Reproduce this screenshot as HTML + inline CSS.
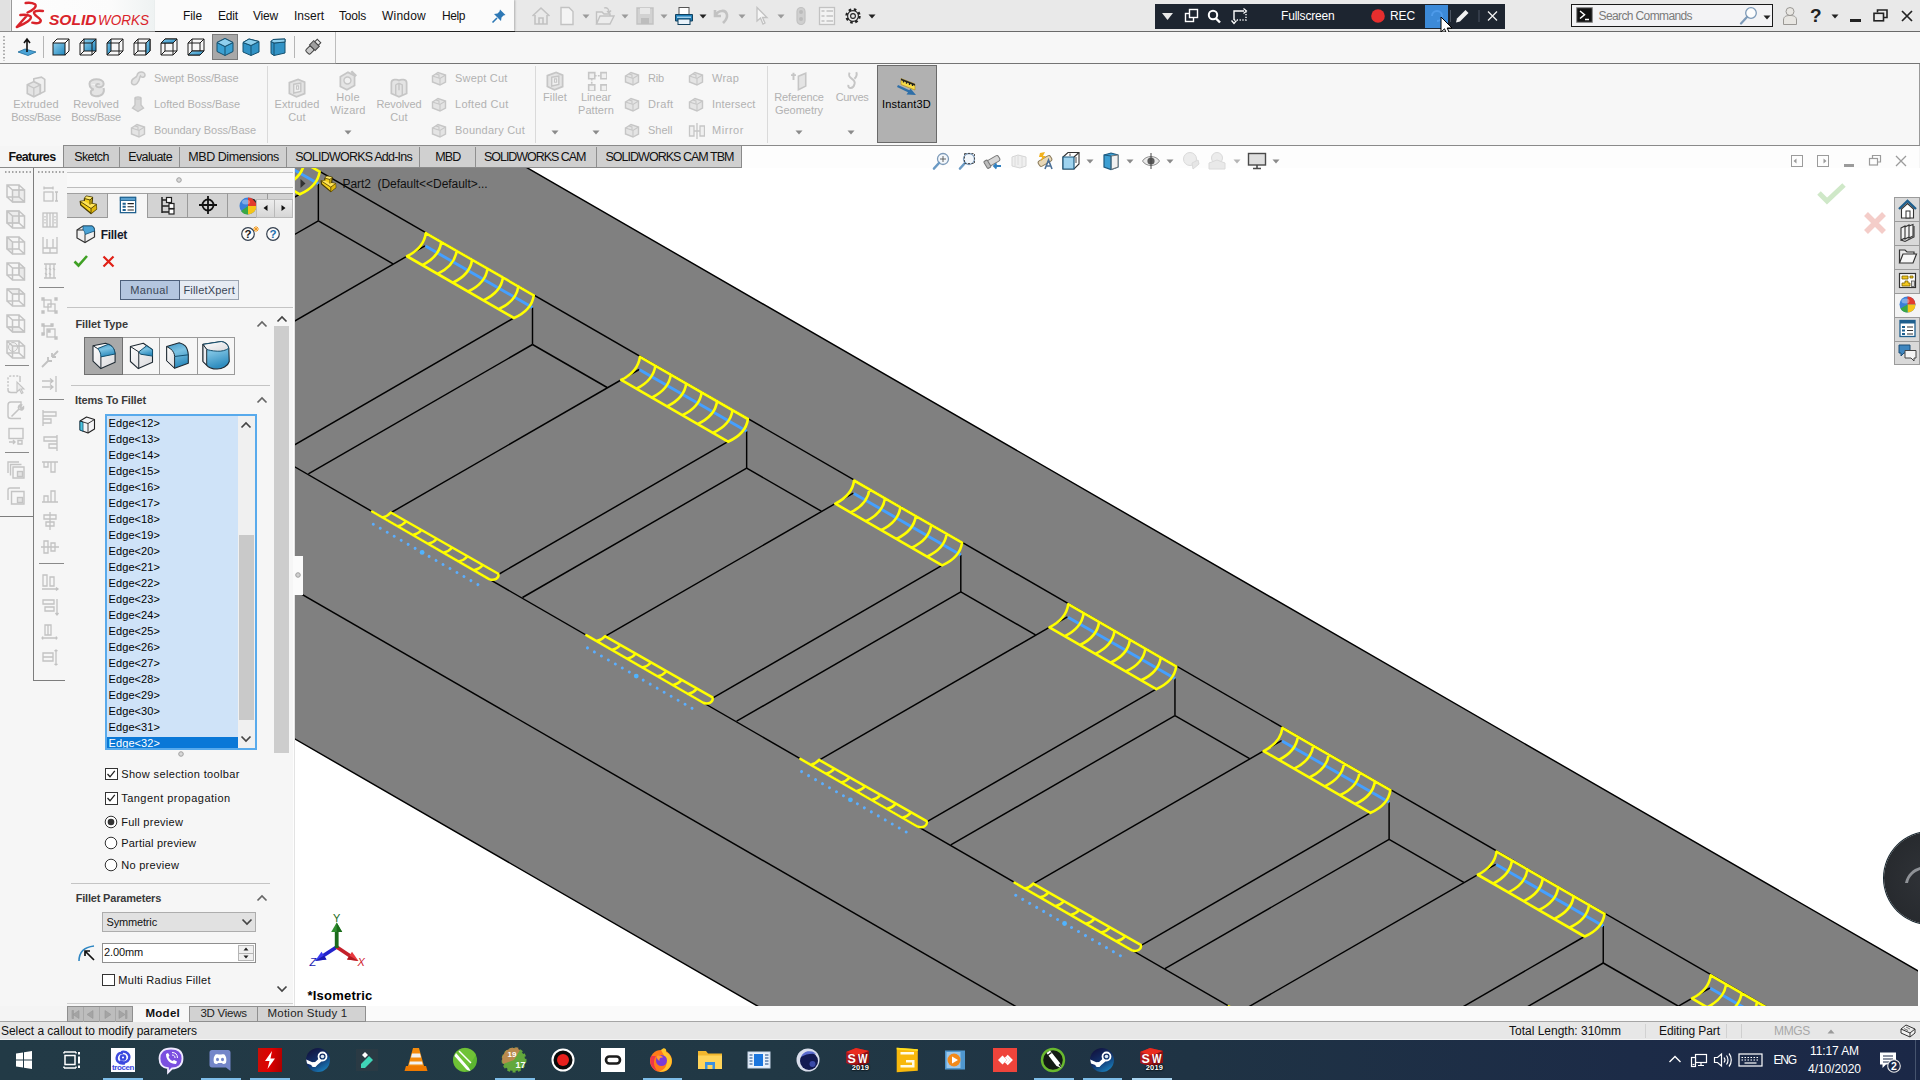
<!DOCTYPE html>
<html lang="en"><head><meta charset="utf-8"><title>SOLIDWORKS - Fillet</title><style>
html,body{margin:0;padding:0;}
body{width:1920px;height:1080px;overflow:hidden;position:relative;background:#fff;font-family:"Liberation Sans",sans-serif;font-size:12px;}
.t{position:absolute;white-space:nowrap;display:block;}
.b{position:absolute;display:block;}
svg text{font-family:"Liberation Sans",sans-serif;}
</style></head>
<body>
<svg class="vp" width="1920" height="1080" viewBox="0 0 1920 1080" style="position:absolute;left:0;top:0">
<defs><clipPath id="vpc"><rect x="295" y="168" width="1623" height="838"/></clipPath></defs>
<g clip-path="url(#vpc)">
<rect x="295" y="168" width="1623" height="838" fill="#fff"/>
<polygon points="200,-21.08 2000,1018.15 2000,1723.38 200,684.15" fill="#808080" stroke="#000" stroke-width="1.45"/>
<line x1="200" y1="102.31" x2="2000" y2="1141.54" stroke="#000" stroke-width="1.45"/>
<line x1="200" y1="412.14" x2="2000" y2="1451.37" stroke="#000" stroke-width="1.45"/>
<line x1="200" y1="535.46" x2="2000" y2="1574.69" stroke="#000" stroke-width="1.45"/>
<line x1="104.2" y1="60.1" x2="104.2" y2="97.1" stroke="#000" stroke-width="1.45"/>
<line x1="104.2" y1="97.1" x2="-119.95" y2="226.4" stroke="#000" stroke-width="1.45"/>
<line x1="85.45" y1="70.6" x2="-144.95" y2="203.9" stroke="#000" stroke-width="1.45"/>
<line x1="-3.3" y1="-1.6" x2="-251.2" y2="141.4" stroke="#000" stroke-width="1.45"/>
<line x1="104.2" y1="97.1" x2="178.9" y2="140.1" stroke="#000" stroke-width="1.45"/>
<line x1="318.35" y1="183.8" x2="318.35" y2="220.8" stroke="#000" stroke-width="1.45"/>
<line x1="318.35" y1="220.8" x2="94.2" y2="350.1" stroke="#000" stroke-width="1.45"/>
<line x1="299.6" y1="194.3" x2="69.2" y2="327.6" stroke="#000" stroke-width="1.45"/>
<line x1="210.85" y1="122.1" x2="-37.05" y2="265.1" stroke="#000" stroke-width="1.45"/>
<line x1="318.35" y1="220.8" x2="393.05" y2="263.8" stroke="#000" stroke-width="1.45"/>
<line x1="532.5" y1="307.5" x2="532.5" y2="344.5" stroke="#000" stroke-width="1.45"/>
<line x1="532.5" y1="344.5" x2="308.35" y2="473.8" stroke="#000" stroke-width="1.45"/>
<line x1="513.75" y1="318" x2="283.35" y2="451.3" stroke="#000" stroke-width="1.45"/>
<line x1="425" y1="245.8" x2="177.1" y2="388.8" stroke="#000" stroke-width="1.45"/>
<line x1="532.5" y1="344.5" x2="607.2" y2="387.5" stroke="#000" stroke-width="1.45"/>
<line x1="746.65" y1="431.2" x2="746.65" y2="468.2" stroke="#000" stroke-width="1.45"/>
<line x1="746.65" y1="468.2" x2="522.5" y2="597.5" stroke="#000" stroke-width="1.45"/>
<line x1="727.9" y1="441.7" x2="497.5" y2="575" stroke="#000" stroke-width="1.45"/>
<line x1="639.15" y1="369.5" x2="391.25" y2="512.5" stroke="#000" stroke-width="1.45"/>
<line x1="746.65" y1="468.2" x2="821.35" y2="511.2" stroke="#000" stroke-width="1.45"/>
<line x1="960.8" y1="554.9" x2="960.8" y2="591.9" stroke="#000" stroke-width="1.45"/>
<line x1="960.8" y1="591.9" x2="736.65" y2="721.2" stroke="#000" stroke-width="1.45"/>
<line x1="942.05" y1="565.4" x2="711.65" y2="698.7" stroke="#000" stroke-width="1.45"/>
<line x1="853.3" y1="493.2" x2="605.4" y2="636.2" stroke="#000" stroke-width="1.45"/>
<line x1="960.8" y1="591.9" x2="1035.5" y2="634.9" stroke="#000" stroke-width="1.45"/>
<line x1="1174.95" y1="678.6" x2="1174.95" y2="715.6" stroke="#000" stroke-width="1.45"/>
<line x1="1174.95" y1="715.6" x2="950.8" y2="844.9" stroke="#000" stroke-width="1.45"/>
<line x1="1156.2" y1="689.1" x2="925.8" y2="822.4" stroke="#000" stroke-width="1.45"/>
<line x1="1067.45" y1="616.9" x2="819.55" y2="759.9" stroke="#000" stroke-width="1.45"/>
<line x1="1174.95" y1="715.6" x2="1249.65" y2="758.6" stroke="#000" stroke-width="1.45"/>
<line x1="1389.1" y1="802.3" x2="1389.1" y2="839.3" stroke="#000" stroke-width="1.45"/>
<line x1="1389.1" y1="839.3" x2="1164.95" y2="968.6" stroke="#000" stroke-width="1.45"/>
<line x1="1370.35" y1="812.8" x2="1139.95" y2="946.1" stroke="#000" stroke-width="1.45"/>
<line x1="1281.6" y1="740.6" x2="1033.7" y2="883.6" stroke="#000" stroke-width="1.45"/>
<line x1="1389.1" y1="839.3" x2="1463.8" y2="882.3" stroke="#000" stroke-width="1.45"/>
<line x1="1603.25" y1="926" x2="1603.25" y2="963" stroke="#000" stroke-width="1.45"/>
<line x1="1603.25" y1="963" x2="1379.1" y2="1092.3" stroke="#000" stroke-width="1.45"/>
<line x1="1584.5" y1="936.5" x2="1354.1" y2="1069.8" stroke="#000" stroke-width="1.45"/>
<line x1="1495.75" y1="864.3" x2="1247.85" y2="1007.3" stroke="#000" stroke-width="1.45"/>
<line x1="1603.25" y1="963" x2="1677.95" y2="1006" stroke="#000" stroke-width="1.45"/>
<line x1="1817.4" y1="1049.7" x2="1817.4" y2="1086.7" stroke="#000" stroke-width="1.45"/>
<line x1="1817.4" y1="1086.7" x2="1593.25" y2="1216" stroke="#000" stroke-width="1.45"/>
<line x1="1798.65" y1="1060.2" x2="1568.25" y2="1193.5" stroke="#000" stroke-width="1.45"/>
<line x1="1709.9" y1="988" x2="1462" y2="1131" stroke="#000" stroke-width="1.45"/>
<line x1="1817.4" y1="1086.7" x2="1892.1" y2="1129.7" stroke="#000" stroke-width="1.45"/>
<line x1="2031.55" y1="1173.4" x2="2031.55" y2="1210.4" stroke="#000" stroke-width="1.45"/>
<line x1="2031.55" y1="1210.4" x2="1807.4" y2="1339.7" stroke="#000" stroke-width="1.45"/>
<line x1="2012.8" y1="1183.9" x2="1782.4" y2="1317.2" stroke="#000" stroke-width="1.45"/>
<line x1="1924.05" y1="1111.7" x2="1676.15" y2="1254.7" stroke="#000" stroke-width="1.45"/>
<line x1="2031.55" y1="1210.4" x2="2106.25" y2="1253.4" stroke="#000" stroke-width="1.45"/>
<line x1="-2.8" y1="-1.3" x2="104.2" y2="60.1" stroke="#45a0ff" stroke-width="2.9"/>
<path d="M-2.5,-14.3 L105.45,47.9 M-21.3,8.85 L85.6,70.6 M-2.5,-14.3 Q-4.4,0.4 -21.3,8.85 M12.92,-5.41 Q11.02,9.29 -6.03,17.67 M28.34,3.47 Q26.44,18.17 9.24,26.49 M43.76,12.36 Q41.86,27.06 24.51,35.31 M59.19,21.24 Q57.29,35.94 39.79,44.14 M74.61,30.13 Q72.71,44.83 55.06,52.96 M90.03,39.01 Q88.13,53.71 70.33,61.78 M105.45,47.9 Q103.55,62.6 85.6,70.6" fill="none" stroke="#ffff00" stroke-width="2.6" stroke-linecap="round" stroke-linejoin="round"/>
<path d="M-37.5,265.1 L70,326.35 M-56.2,264.1 L60.81,331.66 M-37.5,265.1 Q-40.94,269.15 -45.98,270 M-22.14,273.85 Q-25.64,277.93 -30.73,278.81 M-6.79,282.6 Q-10.33,286.71 -15.47,287.61 M8.57,291.35 Q4.98,295.49 -0.21,296.42 M23.93,300.1 Q20.28,304.27 15.04,305.23 M39.29,308.85 Q35.59,313.04 30.3,314.04 M54.64,317.6 Q50.9,321.82 45.55,322.85 M70,326.35 C71.5,330.85 65.81,333.86 60.81,331.66" fill="none" stroke="#ffff00" stroke-width="2.5" stroke-linecap="round" stroke-linejoin="round"/>
<line x1="-55" y1="276.8" x2="49.8" y2="337.32" stroke="#5aaeff" stroke-width="3" stroke-linecap="round" stroke-dasharray="0.01 8.043" />
<circle cx="-6.2" cy="305" r="2.400" fill="#4fb4ff"/>
<line x1="211.35" y1="122.4" x2="318.35" y2="183.8" stroke="#45a0ff" stroke-width="2.9"/>
<path d="M211.65,109.4 L319.6,171.6 M192.85,132.55 L299.75,194.3 M211.65,109.4 Q209.75,124.1 192.85,132.55 M227.07,118.29 Q225.17,132.99 208.12,141.37 M242.49,127.17 Q240.59,141.87 223.39,150.19 M257.91,136.06 Q256.01,150.76 238.66,159.01 M273.34,144.94 Q271.44,159.64 253.94,167.84 M288.76,153.83 Q286.86,168.53 269.21,176.66 M304.18,162.71 Q302.28,177.41 284.48,185.48 M319.6,171.6 Q317.7,186.3 299.75,194.3" fill="none" stroke="#ffff00" stroke-width="2.6" stroke-linecap="round" stroke-linejoin="round"/>
<path d="M176.65,388.8 L284.15,450.05 M157.95,387.8 L274.96,455.36 M176.65,388.8 Q173.21,392.85 168.17,393.7 M192.01,397.55 Q188.51,401.63 183.42,402.51 M207.36,406.3 Q203.82,410.41 198.68,411.31 M222.72,415.05 Q219.13,419.19 213.94,420.12 M238.08,423.8 Q234.43,427.97 229.19,428.93 M253.44,432.55 Q249.74,436.74 244.45,437.74 M268.79,441.3 Q265.05,445.52 259.7,446.55 M284.15,450.05 C285.65,454.55 279.96,457.56 274.96,455.36" fill="none" stroke="#ffff00" stroke-width="2.5" stroke-linecap="round" stroke-linejoin="round"/>
<line x1="159.15" y1="400.5" x2="263.95" y2="461.02" stroke="#5aaeff" stroke-width="3" stroke-linecap="round" stroke-dasharray="0.01 8.043" />
<circle cx="207.95" cy="428.7" r="2.400" fill="#4fb4ff"/>
<line x1="425.5" y1="246.1" x2="532.5" y2="307.5" stroke="#45a0ff" stroke-width="2.9"/>
<path d="M425.8,233.1 L533.75,295.3 M407,256.25 L513.9,318 M425.8,233.1 Q423.9,247.8 407,256.25 M441.22,241.99 Q439.32,256.69 422.27,265.07 M456.64,250.87 Q454.74,265.57 437.54,273.89 M472.06,259.76 Q470.16,274.46 452.81,282.71 M487.49,268.64 Q485.59,283.34 468.09,291.54 M502.91,277.53 Q501.01,292.23 483.36,300.36 M518.33,286.41 Q516.43,301.11 498.63,309.18 M533.75,295.3 Q531.85,310 513.9,318" fill="none" stroke="#ffff00" stroke-width="2.6" stroke-linecap="round" stroke-linejoin="round"/>
<path d="M390.8,512.5 L498.3,573.75 M372.1,511.5 L489.11,579.06 M390.8,512.5 Q387.36,516.55 382.32,517.4 M406.16,521.25 Q402.66,525.33 397.57,526.21 M421.51,530 Q417.97,534.11 412.83,535.01 M436.87,538.75 Q433.28,542.89 428.09,543.82 M452.23,547.5 Q448.58,551.67 443.34,552.63 M467.59,556.25 Q463.89,560.44 458.6,561.44 M482.94,565 Q479.2,569.22 473.85,570.25 M498.3,573.75 C499.8,578.25 494.11,581.26 489.11,579.06" fill="none" stroke="#ffff00" stroke-width="2.5" stroke-linecap="round" stroke-linejoin="round"/>
<line x1="373.3" y1="524.2" x2="478.1" y2="584.72" stroke="#5aaeff" stroke-width="3" stroke-linecap="round" stroke-dasharray="0.01 8.043" />
<circle cx="422.1" cy="552.4" r="2.400" fill="#4fb4ff"/>
<line x1="639.65" y1="369.8" x2="746.65" y2="431.2" stroke="#45a0ff" stroke-width="2.9"/>
<path d="M639.95,356.8 L747.9,419 M621.15,379.95 L728.05,441.7 M639.95,356.8 Q638.05,371.5 621.15,379.95 M655.37,365.69 Q653.47,380.39 636.42,388.77 M670.79,374.57 Q668.89,389.27 651.69,397.59 M686.21,383.46 Q684.31,398.16 666.96,406.41 M701.64,392.34 Q699.74,407.04 682.24,415.24 M717.06,401.23 Q715.16,415.93 697.51,424.06 M732.48,410.11 Q730.58,424.81 712.78,432.88 M747.9,419 Q746,433.7 728.05,441.7" fill="none" stroke="#ffff00" stroke-width="2.6" stroke-linecap="round" stroke-linejoin="round"/>
<path d="M604.95,636.2 L712.45,697.45 M586.25,635.2 L703.26,702.76 M604.95,636.2 Q601.51,640.25 596.47,641.1 M620.31,644.95 Q616.81,649.03 611.72,649.91 M635.66,653.7 Q632.12,657.81 626.98,658.71 M651.02,662.45 Q647.43,666.59 642.24,667.52 M666.38,671.2 Q662.73,675.37 657.49,676.33 M681.74,679.95 Q678.04,684.14 672.75,685.14 M697.09,688.7 Q693.35,692.92 688,693.95 M712.45,697.45 C713.95,701.95 708.26,704.96 703.26,702.76" fill="none" stroke="#ffff00" stroke-width="2.5" stroke-linecap="round" stroke-linejoin="round"/>
<line x1="587.45" y1="647.9" x2="692.25" y2="708.42" stroke="#5aaeff" stroke-width="3" stroke-linecap="round" stroke-dasharray="0.01 8.043" />
<circle cx="636.25" cy="676.1" r="2.400" fill="#4fb4ff"/>
<line x1="853.8" y1="493.5" x2="960.8" y2="554.9" stroke="#45a0ff" stroke-width="2.9"/>
<path d="M854.1,480.5 L962.05,542.7 M835.3,503.65 L942.2,565.4 M854.1,480.5 Q852.2,495.2 835.3,503.65 M869.52,489.39 Q867.62,504.09 850.57,512.47 M884.94,498.27 Q883.04,512.97 865.84,521.29 M900.36,507.16 Q898.46,521.86 881.11,530.11 M915.79,516.04 Q913.89,530.74 896.39,538.94 M931.21,524.93 Q929.31,539.63 911.66,547.76 M946.63,533.81 Q944.73,548.51 926.93,556.58 M962.05,542.7 Q960.15,557.4 942.2,565.4" fill="none" stroke="#ffff00" stroke-width="2.6" stroke-linecap="round" stroke-linejoin="round"/>
<path d="M819.1,759.9 L926.6,821.15 M800.4,758.9 L917.41,826.46 M819.1,759.9 Q815.66,763.95 810.62,764.8 M834.46,768.65 Q830.96,772.73 825.87,773.61 M849.81,777.4 Q846.27,781.51 841.13,782.41 M865.17,786.15 Q861.58,790.29 856.39,791.22 M880.53,794.9 Q876.88,799.07 871.64,800.03 M895.89,803.65 Q892.19,807.84 886.9,808.84 M911.24,812.4 Q907.5,816.62 902.15,817.65 M926.6,821.15 C928.1,825.65 922.41,828.66 917.41,826.46" fill="none" stroke="#ffff00" stroke-width="2.5" stroke-linecap="round" stroke-linejoin="round"/>
<line x1="801.6" y1="771.6" x2="906.4" y2="832.12" stroke="#5aaeff" stroke-width="3" stroke-linecap="round" stroke-dasharray="0.01 8.043" />
<circle cx="850.4" cy="799.8" r="2.400" fill="#4fb4ff"/>
<line x1="1067.95" y1="617.2" x2="1174.95" y2="678.6" stroke="#45a0ff" stroke-width="2.9"/>
<path d="M1068.25,604.2 L1176.2,666.4 M1049.45,627.35 L1156.35,689.1 M1068.25,604.2 Q1066.35,618.9 1049.45,627.35 M1083.67,613.09 Q1081.77,627.79 1064.72,636.17 M1099.09,621.97 Q1097.19,636.67 1079.99,644.99 M1114.51,630.86 Q1112.61,645.56 1095.26,653.81 M1129.94,639.74 Q1128.04,654.44 1110.54,662.64 M1145.36,648.63 Q1143.46,663.33 1125.81,671.46 M1160.78,657.51 Q1158.88,672.21 1141.08,680.28 M1176.2,666.4 Q1174.3,681.1 1156.35,689.1" fill="none" stroke="#ffff00" stroke-width="2.6" stroke-linecap="round" stroke-linejoin="round"/>
<path d="M1033.25,883.6 L1140.75,944.85 M1014.55,882.6 L1131.56,950.16 M1033.25,883.6 Q1029.81,887.65 1024.77,888.5 M1048.61,892.35 Q1045.11,896.43 1040.02,897.31 M1063.96,901.1 Q1060.42,905.21 1055.28,906.11 M1079.32,909.85 Q1075.73,913.99 1070.54,914.92 M1094.68,918.6 Q1091.03,922.77 1085.79,923.73 M1110.04,927.35 Q1106.34,931.54 1101.05,932.54 M1125.39,936.1 Q1121.65,940.32 1116.3,941.35 M1140.75,944.85 C1142.25,949.35 1136.56,952.36 1131.56,950.16" fill="none" stroke="#ffff00" stroke-width="2.5" stroke-linecap="round" stroke-linejoin="round"/>
<line x1="1015.75" y1="895.3" x2="1120.55" y2="955.82" stroke="#5aaeff" stroke-width="3" stroke-linecap="round" stroke-dasharray="0.01 8.043" />
<circle cx="1064.55" cy="923.5" r="2.400" fill="#4fb4ff"/>
<line x1="1282.1" y1="740.9" x2="1389.1" y2="802.3" stroke="#45a0ff" stroke-width="2.9"/>
<path d="M1282.4,727.9 L1390.35,790.1 M1263.6,751.05 L1370.5,812.8 M1282.4,727.9 Q1280.5,742.6 1263.6,751.05 M1297.82,736.79 Q1295.92,751.49 1278.87,759.87 M1313.24,745.67 Q1311.34,760.37 1294.14,768.69 M1328.66,754.56 Q1326.76,769.26 1309.41,777.51 M1344.09,763.44 Q1342.19,778.14 1324.69,786.34 M1359.51,772.33 Q1357.61,787.03 1339.96,795.16 M1374.93,781.21 Q1373.03,795.91 1355.23,803.98 M1390.35,790.1 Q1388.45,804.8 1370.5,812.8" fill="none" stroke="#ffff00" stroke-width="2.6" stroke-linecap="round" stroke-linejoin="round"/>
<path d="M1247.4,1007.3 L1354.9,1068.55 M1228.7,1006.3 L1345.71,1073.86 M1247.4,1007.3 Q1243.96,1011.35 1238.92,1012.2 M1262.76,1016.05 Q1259.26,1020.13 1254.17,1021.01 M1278.11,1024.8 Q1274.57,1028.91 1269.43,1029.81 M1293.47,1033.55 Q1289.88,1037.69 1284.69,1038.62 M1308.83,1042.3 Q1305.18,1046.47 1299.94,1047.43 M1324.19,1051.05 Q1320.49,1055.24 1315.2,1056.24 M1339.54,1059.8 Q1335.8,1064.02 1330.45,1065.05 M1354.9,1068.55 C1356.4,1073.05 1350.71,1076.06 1345.71,1073.86" fill="none" stroke="#ffff00" stroke-width="2.5" stroke-linecap="round" stroke-linejoin="round"/>
<line x1="1229.9" y1="1019" x2="1334.7" y2="1079.52" stroke="#5aaeff" stroke-width="3" stroke-linecap="round" stroke-dasharray="0.01 8.043" />
<circle cx="1278.7" cy="1047.2" r="2.400" fill="#4fb4ff"/>
<line x1="1496.25" y1="864.6" x2="1603.25" y2="926" stroke="#45a0ff" stroke-width="2.9"/>
<path d="M1496.55,851.6 L1604.5,913.8 M1477.75,874.75 L1584.65,936.5 M1496.55,851.6 Q1494.65,866.3 1477.75,874.75 M1511.97,860.49 Q1510.07,875.19 1493.02,883.57 M1527.39,869.37 Q1525.49,884.07 1508.29,892.39 M1542.81,878.26 Q1540.91,892.96 1523.56,901.21 M1558.24,887.14 Q1556.34,901.84 1538.84,910.04 M1573.66,896.03 Q1571.76,910.73 1554.11,918.86 M1589.08,904.91 Q1587.18,919.61 1569.38,927.68 M1604.5,913.8 Q1602.6,928.5 1584.65,936.5" fill="none" stroke="#ffff00" stroke-width="2.6" stroke-linecap="round" stroke-linejoin="round"/>
<path d="M1461.55,1131 L1569.05,1192.25 M1442.85,1130 L1559.86,1197.56 M1461.55,1131 Q1458.11,1135.05 1453.07,1135.9 M1476.91,1139.75 Q1473.41,1143.83 1468.32,1144.71 M1492.26,1148.5 Q1488.72,1152.61 1483.58,1153.51 M1507.62,1157.25 Q1504.03,1161.39 1498.84,1162.32 M1522.98,1166 Q1519.33,1170.17 1514.09,1171.13 M1538.34,1174.75 Q1534.64,1178.94 1529.35,1179.94 M1553.69,1183.5 Q1549.95,1187.72 1544.6,1188.75 M1569.05,1192.25 C1570.55,1196.75 1564.86,1199.76 1559.86,1197.56" fill="none" stroke="#ffff00" stroke-width="2.5" stroke-linecap="round" stroke-linejoin="round"/>
<line x1="1444.05" y1="1142.7" x2="1548.85" y2="1203.22" stroke="#5aaeff" stroke-width="3" stroke-linecap="round" stroke-dasharray="0.01 8.043" />
<circle cx="1492.85" cy="1170.9" r="2.400" fill="#4fb4ff"/>
<line x1="1710.4" y1="988.3" x2="1817.4" y2="1049.7" stroke="#45a0ff" stroke-width="2.9"/>
<path d="M1710.7,975.3 L1818.65,1037.5 M1691.9,998.45 L1798.8,1060.2 M1710.7,975.3 Q1708.8,990 1691.9,998.45 M1726.12,984.19 Q1724.22,998.89 1707.17,1007.27 M1741.54,993.07 Q1739.64,1007.77 1722.44,1016.09 M1756.96,1001.96 Q1755.06,1016.66 1737.71,1024.91 M1772.39,1010.84 Q1770.49,1025.54 1752.99,1033.74 M1787.81,1019.73 Q1785.91,1034.43 1768.26,1042.56 M1803.23,1028.61 Q1801.33,1043.31 1783.53,1051.38 M1818.65,1037.5 Q1816.75,1052.2 1798.8,1060.2" fill="none" stroke="#ffff00" stroke-width="2.6" stroke-linecap="round" stroke-linejoin="round"/>
<path d="M1675.7,1254.7 L1783.2,1315.95 M1657,1253.7 L1774.01,1321.26 M1675.7,1254.7 Q1672.26,1258.75 1667.22,1259.6 M1691.06,1263.45 Q1687.56,1267.53 1682.47,1268.41 M1706.41,1272.2 Q1702.87,1276.31 1697.73,1277.21 M1721.77,1280.95 Q1718.18,1285.09 1712.99,1286.02 M1737.13,1289.7 Q1733.48,1293.87 1728.24,1294.83 M1752.49,1298.45 Q1748.79,1302.64 1743.5,1303.64 M1767.84,1307.2 Q1764.1,1311.42 1758.75,1312.45 M1783.2,1315.95 C1784.7,1320.45 1779.01,1323.46 1774.01,1321.26" fill="none" stroke="#ffff00" stroke-width="2.5" stroke-linecap="round" stroke-linejoin="round"/>
<line x1="1658.2" y1="1266.4" x2="1763" y2="1326.92" stroke="#5aaeff" stroke-width="3" stroke-linecap="round" stroke-dasharray="0.01 8.043" />
<circle cx="1707" cy="1294.6" r="2.400" fill="#4fb4ff"/>
<line x1="1924.55" y1="1112" x2="2031.55" y2="1173.4" stroke="#45a0ff" stroke-width="2.9"/>
<path d="M1924.85,1099 L2032.8,1161.2 M1906.05,1122.15 L2012.95,1183.9 M1924.85,1099 Q1922.95,1113.7 1906.05,1122.15 M1940.27,1107.89 Q1938.37,1122.59 1921.32,1130.97 M1955.69,1116.77 Q1953.79,1131.47 1936.59,1139.79 M1971.11,1125.66 Q1969.21,1140.36 1951.86,1148.61 M1986.54,1134.54 Q1984.64,1149.24 1967.14,1157.44 M2001.96,1143.43 Q2000.06,1158.13 1982.41,1166.26 M2017.38,1152.31 Q2015.48,1167.01 1997.68,1175.08 M2032.8,1161.2 Q2030.9,1175.9 2012.95,1183.9" fill="none" stroke="#ffff00" stroke-width="2.6" stroke-linecap="round" stroke-linejoin="round"/>
<path d="M1889.85,1378.4 L1997.35,1439.65 M1871.15,1377.4 L1988.16,1444.96 M1889.85,1378.4 Q1886.41,1382.45 1881.37,1383.3 M1905.21,1387.15 Q1901.71,1391.23 1896.62,1392.11 M1920.56,1395.9 Q1917.02,1400.01 1911.88,1400.91 M1935.92,1404.65 Q1932.33,1408.79 1927.14,1409.72 M1951.28,1413.4 Q1947.63,1417.57 1942.39,1418.53 M1966.64,1422.15 Q1962.94,1426.34 1957.65,1427.34 M1981.99,1430.9 Q1978.25,1435.12 1972.9,1436.15 M1997.35,1439.65 C1998.85,1444.15 1993.16,1447.16 1988.16,1444.96" fill="none" stroke="#ffff00" stroke-width="2.5" stroke-linecap="round" stroke-linejoin="round"/>
<line x1="1872.35" y1="1390.1" x2="1977.15" y2="1450.62" stroke="#5aaeff" stroke-width="3" stroke-linecap="round" stroke-dasharray="0.01 8.043" />
<circle cx="1921.15" cy="1418.3" r="2.400" fill="#4fb4ff"/>
</g></svg>
<div class="b" style="left:0px;top:168px;width:295px;height:838px;background:#f6f6f6;"></div>
<div class="b" style="left:293px;top:168px;width:2px;height:838px;background:#fdfdfd;"></div>
<div class="b" style="left:294px;top:168px;width:1px;height:838px;background:#e3e3e3;"></div>
<div class="b" style="left:293px;top:556px;width:10px;height:39px;background:#fbfbfb;"></div>
<svg class="b" style="left:294px;top:571px" width="8" height="8" viewBox="0 0 8 8"><circle cx="4" cy="4" r="2.300" fill="#d0d0d0" stroke="#9a9a9a" stroke-width="0.900"/></svg>
<div class="b" style="left:33px;top:168px;width:1px;height:513px;background:#7d7d7d;"></div>
<div class="b" style="left:33px;top:680px;width:32px;height:1px;background:#7d7d7d;"></div>
<div class="b" style="left:0px;top:516px;width:33px;height:1px;background:#7d7d7d;"></div>
<svg class="b" style="left:5px;top:170px" width="26" height="4" viewBox="0 0 26 4"><path d="M0,2 H26" stroke="#a5a5a5" stroke-width="1.800" stroke-dasharray="1.500 2"/></svg>
<svg class="b" style="left:38px;top:170px" width="26" height="4" viewBox="0 0 26 4"><path d="M0,2 H26" stroke="#a5a5a5" stroke-width="1.800" stroke-dasharray="1.500 2"/></svg>
<svg class="b" style="left:5px;top:183px" width="22" height="22" viewBox="0 0 22 22"><rect x="7.500" y="7" width="12" height="12" fill="#ececec" stroke="#c4c4c4"/><path d="M7.500,7 H19.500 V19 H7.500 Z M2,2 H14 V14 H2 Z M2,2 L7.500,7 M14,2 L19.500,7 M14,14 L19.500,19 M2,14 L7.500,19" fill="none" stroke="#c4c4c4" stroke-width="1.500"/></svg>
<svg class="b" style="left:5px;top:209px" width="22" height="22" viewBox="0 0 22 22"><rect x="2" y="2" width="12" height="12" fill="#ececec" stroke="#c4c4c4"/><path d="M7.500,7 H19.500 V19 H7.500 Z M2,2 H14 V14 H2 Z M2,2 L7.500,7 M14,2 L19.500,7 M14,14 L19.500,19 M2,14 L7.500,19" fill="none" stroke="#c4c4c4" stroke-width="1.500"/></svg>
<svg class="b" style="left:5px;top:235px" width="22" height="22" viewBox="0 0 22 22"><path d="M2,2 L7.500,7 V19 L2,14 Z" fill="#e9e9e9" stroke="#c4c4c4"/><path d="M7.500,7 H19.500 V19 H7.500 Z M2,2 H14 V14 H2 Z M2,2 L7.500,7 M14,2 L19.500,7 M14,14 L19.500,19 M2,14 L7.500,19" fill="none" stroke="#c4c4c4" stroke-width="1.500"/></svg>
<svg class="b" style="left:5px;top:261px" width="22" height="22" viewBox="0 0 22 22"><path d="M14,2 L19.500,7 V19 L14,14 Z" fill="#e9e9e9" stroke="#c4c4c4"/><path d="M7.500,7 H19.500 V19 H7.500 Z M2,2 H14 V14 H2 Z M2,2 L7.500,7 M14,2 L19.500,7 M14,14 L19.500,19 M2,14 L7.500,19" fill="none" stroke="#c4c4c4" stroke-width="1.500"/></svg>
<svg class="b" style="left:5px;top:287px" width="22" height="22" viewBox="0 0 22 22"><path d="M2,2 H14 L19.500,7 H7.500 Z" fill="#ececec" stroke="#c4c4c4"/><path d="M7.500,7 H19.500 V19 H7.500 Z M2,2 H14 V14 H2 Z M2,2 L7.500,7 M14,2 L19.500,7 M14,14 L19.500,19 M2,14 L7.500,19" fill="none" stroke="#c4c4c4" stroke-width="1.500"/></svg>
<svg class="b" style="left:5px;top:313px" width="22" height="22" viewBox="0 0 22 22"><path d="M2,14 H14 L19.500,19 H7.500 Z" fill="#ececec" stroke="#c4c4c4"/><path d="M7.500,7 H19.500 V19 H7.500 Z M2,2 H14 V14 H2 Z M2,2 L7.500,7 M14,2 L19.500,7 M14,14 L19.500,19 M2,14 L7.500,19" fill="none" stroke="#c4c4c4" stroke-width="1.500"/></svg>
<svg class="b" style="left:5px;top:339px" width="22" height="22" viewBox="0 0 22 22"><circle cx="8" cy="8" r="4.500" fill="#f0f0f0" stroke="#c4c4c4"/><path d="M7.500,7 H19.500 V19 H7.500 Z M2,2 H14 V14 H2 Z M2,2 L7.500,7 M14,2 L19.500,7 M14,14 L19.500,19 M2,14 L7.500,19" fill="none" stroke="#c4c4c4" stroke-width="1.500"/></svg>
<div class="b" style="left:5px;top:365px;width:24px;height:1px;background:#8a8a8a;"></div>
<svg class="b" style="left:5px;top:373px" width="22" height="22" viewBox="0 0 22 22"><g fill="none" stroke="#c4c4c4" stroke-width="1.400"><path d="M3,17 V6 C3,4 4,3 6,3 H15" stroke-dasharray="2 1.500"/><path d="M3,17 C3,19 4,19.500 6,19.500 H12 M15,3 V9"/><path d="M12,9 L12,19 L14.500,16.500 L16.500,20.500 L18,19.800 L16,16 L19,16 Z" fill="#ececec" stroke-width="1.100"/></g></svg>
<svg class="b" style="left:5px;top:399px" width="22" height="22" viewBox="0 0 22 22"><g fill="none" stroke="#c4c4c4" stroke-width="1.400"><path d="M3,17 V6 C3,4 4,3 6,3 H16 V10 M3,17 C3,19 4,19.500 6,19.500 H16"/><path d="M8,16 L14,10 M14,10 C12.500,8 14,5.500 16.500,6 L15,8 L16.500,9.500 L18.500,8 C19,10.500 16.500,12 14,10 Z M8,16 L6.500,17.500" stroke-width="1.600"/></g></svg>
<svg class="b" style="left:5px;top:425px" width="22" height="22" viewBox="0 0 22 22"><g fill="none" stroke="#c4c4c4" stroke-width="1.400"><rect x="4" y="3.500" width="14" height="10"/><path d="M4,17 H10 M8,15 L10,17 L8,19 M13,15.500 H17 V19 H13 Z"/></g></svg>
<div class="b" style="left:5px;top:452px;width:24px;height:1px;background:#8a8a8a;"></div>
<svg class="b" style="left:5px;top:459px" width="22" height="22" viewBox="0 0 22 22"><g fill="none" stroke="#c4c4c4" stroke-width="1.400"><path d="M3,14 V3 H14 M5.500,16.500 V5.500 H16.500 M8,8 H19 V19 H8 Z"/><rect x="12.500" y="12.500" width="5" height="5" fill="#e4e4e4"/></g></svg>
<svg class="b" style="left:5px;top:485px" width="22" height="22" viewBox="0 0 22 22"><g fill="none" stroke="#c4c4c4" stroke-width="1.400"><path d="M3,15 V5 C3,4 4,3 5,3 H15 M6.500,6.500 H19 V19 H6.500 Z"/><rect x="12.500" y="12.500" width="5" height="5" fill="#e4e4e4"/></g></svg>
<svg class="b" style="left:39px;top:185px" width="22" height="22" viewBox="0 0 22 22"><g fill="none" stroke="#c2c2c2" stroke-width="1.300"><rect x="5" y="7" width="9" height="9"/><path d="M5,3 H14 M5,1.500 V4.500 M14,1.500 V4.500 M17.500,7 V16 M16,7 H19 M16,16 H19"/></g></svg>
<svg class="b" style="left:39px;top:209px" width="22" height="22" viewBox="0 0 22 22"><g fill="none" stroke="#c2c2c2" stroke-width="1.300"><rect x="4" y="4" width="14" height="14"/><path d="M8,4 V18 M11,4 V18 M14,4 V18"/><path d="M6,7 L6,15 M16,7 V15" stroke-dasharray="1.500 1.500"/></g></svg>
<svg class="b" style="left:39px;top:234px" width="22" height="22" viewBox="0 0 22 22"><g fill="none" stroke="#c2c2c2" stroke-width="1.300"><path d="M4,3 V19 H18 V3 M4,14 H18 M8,5 V14 M14,5 V14 M11,14 V19"/></g></svg>
<svg class="b" style="left:39px;top:260px" width="22" height="22" viewBox="0 0 22 22"><g fill="none" stroke="#c2c2c2" stroke-width="1.300"><path d="M5,4 H17 M5,18 H17 M7,4 V18 M11,4 V18 M15,4 V18"/><path d="M6,8 L8,10 M10,8 L12,10 M14,8 L16,10 M6,13 L8,15 M10,13 L12,15" /></g></svg>
<svg class="b" style="left:39px;top:295px" width="22" height="22" viewBox="0 0 22 22"><g fill="none" stroke="#c2c2c2" stroke-width="1.300"><rect x="5" y="5" width="7" height="7"/><rect x="9" y="9" width="7" height="7"/><path d="M3,3 h2 v2 h-2z M16,3 h2 v2 h-2z M3,16 h2 v2 h-2z M16,16 h2v2h-2z" fill="#c2c2c2"/></g></svg>
<svg class="b" style="left:39px;top:321px" width="22" height="22" viewBox="0 0 22 22"><g fill="none" stroke="#c2c2c2" stroke-width="1.300"><rect x="8" y="8" width="8" height="8"/><path d="M4,5 H14 M5,4 V14"/><path d="M3,3 h2 v2 h-2z M12,3 h2 v2 h-2z M3,12 h2 v2 h-2z M16,16 h2v2h-2z M9,9 h2v2h-2z" fill="#c2c2c2"/></g></svg>
<svg class="b" style="left:39px;top:348px" width="22" height="22" viewBox="0 0 22 22"><g fill="none" stroke="#c2c2c2" stroke-width="1.300"><path d="M3,19 L9,13 M9,13 V9 M9,13 H13 M19,3 L13,9 M13,9 V5 M13,9 H17" stroke-width="1.800"/></g></svg>
<svg class="b" style="left:39px;top:373px" width="22" height="22" viewBox="0 0 22 22"><g fill="none" stroke="#c2c2c2" stroke-width="1.300"><path d="M17,3 V19 M3,8 H14 M11,5.500 L14,8 L11,10.500 M3,14 H14 M11,11.500 L14,14 L11,16.500"/></g></svg>
<svg class="b" style="left:39px;top:407px" width="22" height="22" viewBox="0 0 22 22"><g fill="none" stroke="#c2c2c2" stroke-width="1.300"><path d="M4,3 V19 M4,5 H17 V9 H4 M4,12 H12 V16 H4"/></g></svg>
<svg class="b" style="left:39px;top:432px" width="22" height="22" viewBox="0 0 22 22"><g fill="none" stroke="#c2c2c2" stroke-width="1.300"><path d="M18,3 V19 M18,5 H5 V9 H18 M18,12 H10 V16 H18"/></g></svg>
<svg class="b" style="left:39px;top:458px" width="22" height="22" viewBox="0 0 22 22"><g fill="none" stroke="#c2c2c2" stroke-width="1.300"><path d="M3,4 H19 M5,4 V9 H9 V4 M12,4 V14 H16 V4"/></g></svg>
<svg class="b" style="left:39px;top:484px" width="22" height="22" viewBox="0 0 22 22"><g fill="none" stroke="#c2c2c2" stroke-width="1.300"><path d="M3,18 H19 M5,18 V12 H9 V18 M12,18 V7 H16 V18"/></g></svg>
<svg class="b" style="left:39px;top:510px" width="22" height="22" viewBox="0 0 22 22"><g fill="none" stroke="#c2c2c2" stroke-width="1.300"><path d="M11,2 V20 M5,5 H17 V9 H5 Z M7,12 H15 V16 H7 Z"/></g></svg>
<svg class="b" style="left:39px;top:536px" width="22" height="22" viewBox="0 0 22 22"><g fill="none" stroke="#c2c2c2" stroke-width="1.300"><path d="M2,11 H20 M5,5 H9 V17 H5 Z M12,7 H16 V15 H12 Z"/></g></svg>
<svg class="b" style="left:39px;top:571px" width="22" height="22" viewBox="0 0 22 22"><g fill="none" stroke="#c2c2c2" stroke-width="1.300"><path d="M4,4 V15 H8 V4 Z M11,6 V15 H15 V6 Z M3,18 H19 M17,16.500 L19,18 L17,19.500"/></g></svg>
<svg class="b" style="left:39px;top:596px" width="22" height="22" viewBox="0 0 22 22"><g fill="none" stroke="#c2c2c2" stroke-width="1.300"><path d="M4,4 H15 V8 H4 Z M6,11 H15 V15 H6 Z M18,3 V19 M16.500,17 L18,19 L19.500,17"/></g></svg>
<svg class="b" style="left:39px;top:621px" width="22" height="22" viewBox="0 0 22 22"><g fill="none" stroke="#c2c2c2" stroke-width="1.300"><path d="M6,4 H12 V14 H6 Z M9,4 V14 M3,17 H18 M4,15.500 L3,17 L4,18.500 M17,15.500 L18,17 L17,18.500"/></g></svg>
<svg class="b" style="left:39px;top:647px" width="22" height="22" viewBox="0 0 22 22"><g fill="none" stroke="#c2c2c2" stroke-width="1.300"><path d="M4,6 H14 V14 H4 Z M4,10 H14 M17,3 V18 M15.500,4 L17,3 L18.500,4 M15.500,17 L17,18 L18.500,17"/></g></svg>
<div class="b" style="left:39px;top:287px;width:25px;height:1px;background:#8a8a8a;"></div>
<div class="b" style="left:39px;top:399px;width:25px;height:1px;background:#8a8a8a;"></div>
<div class="b" style="left:39px;top:563px;width:25px;height:1px;background:#8a8a8a;"></div>
<div class="b" style="left:67px;top:172px;width:226px;height:16px;background:#f9f9f9;border-top:1px solid #c6c6c6;border-bottom:1px solid #bdbdbd;box-sizing:border-box;"></div>
<svg class="b" style="left:175px;top:176px" width="8" height="8" viewBox="0 0 8 8"><circle cx="4" cy="4" r="2.300" fill="#d8d8d8" stroke="#9a9a9a" stroke-width="0.900"/></svg>
<div class="b" style="left:67px;top:193px;width:226px;height:25px;background:#d3d3d3;border-top:1px solid #a0a0a0;border-bottom:1px solid #9a9a9a;box-sizing:border-box;"></div>
<div class="b" style="left:107px;top:193px;width:1px;height:24px;background:#9a9a9a;"></div>
<div class="b" style="left:147px;top:193px;width:1px;height:24px;background:#9a9a9a;"></div>
<div class="b" style="left:187px;top:193px;width:1px;height:24px;background:#9a9a9a;"></div>
<div class="b" style="left:227px;top:193px;width:1px;height:24px;background:#9a9a9a;"></div>
<div class="b" style="left:267px;top:193px;width:1px;height:24px;background:#9a9a9a;"></div>
<div class="b" style="left:108px;top:194px;width:39px;height:25px;background:#f6f6f6;"></div>
<svg class="b" style="left:79px;top:195px" width="20" height="20" viewBox="0 0 20 20"><path d="M1.250,6.500 L5.250,6 L5.500,3.500 L7.500,1.250 L13.500,2.500 L13,8.750 L17.250,9.500 L17.500,14 L12,18.500 L1.750,10 Z" fill="#f4cf1c" stroke="#4a3c00" stroke-width="1.300" stroke-linejoin="round"/><path d="M5.500,3.500 L11,5 L13.500,2.500 L7.500,1.250 Z" fill="#ffe96a"/><path d="M1.250,6.500 L5.250,6 L11,9.500 L13,8.750 L17.250,9.500 L12,13.500 Z" fill="#ffe45a"/><path d="M12,13.500 L17.250,9.500 L17.500,14 L12,18.500 Z" fill="#e0b80e"/><path d="M5.500,3.500 L11,5 L13.500,2.500 M11,5 V9.500 M1.250,6.500 L12,13.500 V18.500 M12,13.500 L17.250,9.500" fill="none" stroke="#4a3c00" stroke-width="0.900"/></svg>
<svg class="b" style="left:119px;top:196px" width="18" height="18" viewBox="0 0 20 20"><rect x="1.500" y="1.500" width="17" height="17" fill="#fff" stroke="#1e5f8e" stroke-width="1.400"/><rect x="1.500" y="1.500" width="17" height="3.500" fill="#5aa0cf" stroke="#1e5f8e"/><path d="M4,8.500 H7.500 M4,12 H7.500 M4,15.500 H7.500" stroke="#1e5f8e" stroke-width="2.200"/><path d="M9.500,8.500 H16.500 M9.500,12 H16.500 M9.500,15.500 H16.500" stroke="#222" stroke-width="1.200"/></svg>
<svg class="b" style="left:158px;top:195px" width="20" height="20" viewBox="0 0 20 20"><path d="M4,2 V18 M4,5 H9 M4,11 H11 M4,17 H11" fill="none" stroke="#222" stroke-width="1.500"/><rect x="8.500" y="2.500" width="5" height="5" fill="#fff" stroke="#222" stroke-width="1.200"/><rect x="11" y="8.500" width="5" height="5" fill="#fff" stroke="#222" stroke-width="1.200"/><rect x="11" y="14" width="5" height="5" fill="#fff" stroke="#222" stroke-width="1.200"/></svg>
<svg class="b" style="left:198px;top:195px" width="20" height="20" viewBox="0 0 20 20"><circle cx="10" cy="10" r="5.500" fill="none" stroke="#111" stroke-width="1.800"/><path d="M10,1 V19 M1,10 H19" stroke="#111" stroke-width="1.800"/></svg>
<svg class="b" style="left:238px;top:196px" width="20" height="20" viewBox="0 0 20 20"><circle cx="10" cy="10" r="8.500" fill="#3b7fd9"/><path d="M10,10 L10,1.500 A8.500,8.500 0 0 1 18.500,10 Z" fill="#e23b2e"/><path d="M10,10 L18.500,10 A8.500,8.500 0 0 1 10,18.500 Z" fill="#f5c518"/><path d="M10,10 L10,18.500 A8.500,8.500 0 0 1 3,15 Z" fill="#3aa845"/><path d="M14,2.500 L19,8 L17,3.500Z" fill="#222"/><ellipse cx="8" cy="6" rx="4" ry="2.500" fill="#fff" opacity="0.350"/></svg>
<div class="b" style="left:256px;top:199px;width:37px;height:19px;background:#dedede;border:1px solid #b9b9b9;box-sizing:border-box;background:linear-gradient(#ededed,#d6d6d6);"></div>
<div class="b" style="left:274px;top:199px;width:1px;height:19px;background:#b9b9b9;"></div>
<svg class="b" style="left:256px;top:199px" width="37" height="19" viewBox="0 0 37 19"><path d="M11.500,6 V12 L7.500,9 Z M25.500,6 V12 L29.500,9 Z" fill="#111"/></svg>
<svg class="b" style="left:75px;top:224px" width="21" height="20" viewBox="0 0 21 20"><path d="M2,6 L8,2 H17 C19,3 19.500,5 19.500,7 V13 L10,18.500 L2,14 Z" fill="#f1f1f1" stroke="#333" stroke-width="1.200"/><path d="M8,2 H17 C19,3 19.500,5 19.500,7 L10,10.500 C10,8 9,6.500 8,6 Z" fill="#4aa3d6" stroke="#1d5a80" stroke-width="0.900"/><path d="M2,6 L8,6 M10,10.500 V18.500" fill="none" stroke="#333" stroke-width="1"/></svg>
<span class="t" style="left:100.75px;top:228px;font-size:12px;line-height:15px;color:#161a2c;font-weight:700;letter-spacing:-0.294px;">Fillet</span>
<svg class="b" style="left:241px;top:226px" width="20" height="16" viewBox="0 0 20 16"><circle cx="7" cy="8" r="6.300" fill="#fbfbfb" stroke="#34404f" stroke-width="1.200"/><path d="M13,1 L17,5 M17,1 L13,5 M15,0 V6 M12,3 H18" stroke="#f39a1e" stroke-width="1"/></svg>
<span class="t" style="left:244.6px;top:226.5px;font-size:11.5px;line-height:15px;color:#1a1a1a;font-weight:700;">?</span>
<svg class="b" style="left:265.8px;top:226px" width="20" height="16" viewBox="0 0 20 16"><circle cx="7" cy="8" r="6.300" fill="#fbfbfb" stroke="#34404f" stroke-width="1.200"/></svg>
<span class="t" style="left:269.4px;top:226.5px;font-size:11.5px;line-height:15px;color:#1f6fae;font-weight:700;">?</span>
<svg class="b" style="left:73px;top:254px" width="16" height="14" viewBox="0 0 16 14"><path d="M1.500,7.500 L5.500,11.500 L14,2" fill="none" stroke="#3fa024" stroke-width="2.600"/></svg>
<svg class="b" style="left:102px;top:255px" width="13" height="13" viewBox="0 0 13 13"><path d="M1.500,1.500 L11.500,11.500 M11.500,1.500 L1.500,11.500" stroke="#e02016" stroke-width="2.200"/></svg>
<div class="b" style="left:120px;top:279.5px;width:59.5px;height:20px;background:#b4c6df;border:1px solid #4d5f7a;box-sizing:border-box;"></div>
<div class="b" style="left:179.5px;top:279.5px;width:59.5px;height:20px;background:#e6ebf3;border:1px solid #9aa3b0;border-left:none;box-sizing:border-box;"></div>
<span class="t" style="left:130.3px;top:282.75px;font-size:11px;line-height:14px;color:#3a4656;letter-spacing:0.354px;">Manual</span>
<span class="t" style="left:183.4px;top:282.75px;font-size:11px;line-height:14px;color:#3a4656;letter-spacing:0.179px;">FilletXpert</span>
<div class="b" style="left:67px;top:307px;width:226px;height:1px;background:#c4c4c4;"></div>
<div class="b" style="left:274px;top:326px;width:15px;height:427px;background:#cdcdcd;"></div>
<svg class="b" style="left:275.5px;top:314.5px" width="12" height="8" viewBox="0 0 12 8"><path d="M1.500,6.500 L6,2 L10.500,6.500" fill="none" stroke="#444" stroke-width="1.700"/></svg>
<svg class="b" style="left:275.5px;top:984.5px" width="12" height="8" viewBox="0 0 12 8"><path d="M1.500,1.500 L6,6 L10.500,1.500" fill="none" stroke="#444" stroke-width="1.700"/></svg>
<span class="t" style="left:75.5px;top:317px;font-size:11px;line-height:14px;color:#3a3a3a;font-weight:700;letter-spacing:-0.099px;">Fillet Type</span>
<svg class="b" style="left:256px;top:319.5px" width="12" height="8" viewBox="0 0 12 8"><path d="M1.500,6.500 L6,2 L10.500,6.500" fill="none" stroke="#666" stroke-width="1.700"/></svg>
<div class="b" style="left:84px;top:337px;width:151px;height:38px;background:#f6f6f6;border:1px solid #9a9a9a;box-sizing:border-box;"></div>
<div class="b" style="left:84px;top:337px;width:38.5px;height:38px;background:#a9a9a9;border:1px solid #707070;box-sizing:border-box;"></div>
<div class="b" style="left:159px;top:338px;width:1px;height:36px;background:#9a9a9a;"></div>
<div class="b" style="left:196.5px;top:338px;width:1px;height:36px;background:#9a9a9a;"></div>
<svg width="0" height="0" style="position:absolute"><defs><linearGradient id="fb" x1="0" y1="0" x2="0.3" y2="1"><stop offset="0" stop-color="#3d94c4"/><stop offset="0.45" stop-color="#7cc2e2"/><stop offset="1" stop-color="#2f8dbf"/></linearGradient><linearGradient id="fw" x1="0" y1="0" x2="1" y2="1"><stop offset="0" stop-color="#ffffff"/><stop offset="1" stop-color="#d9d9dc"/></linearGradient></defs></svg>
<svg class="b" style="left:89.5px;top:342px;overflow:visible" width="28" height="28" viewBox="0 0 28 28"><path d="M3,3.700 L15.500,1.200 C20,2 24,4 25.100,12 V20.300 L10.900,26.600 L3,19.100 Z" fill="url(#fw)" stroke="#1f2a33" stroke-width="1.100" stroke-linejoin="round"/><path d="M7.600,6.600 L18,2.400 C22,3.500 24.500,6 25.100,12 L10.900,14.900 C10.900,11 9.500,8.500 7.600,6.600 Z" fill="url(#fb)" stroke="#14506f" stroke-width="1"/><path d="M3,3.700 L7.600,6.600 M10.900,14.900 V26.600" fill="none" stroke="#1f2a33" stroke-width="1"/></svg>
<svg class="b" style="left:127px;top:342px;overflow:visible" width="28" height="28" viewBox="0 0 28 28"><path d="M3.400,4.500 L16.300,1.200 L25.500,7.800 V20.300 L11.300,26.600 L3.400,19.500 Z" fill="url(#fw)" stroke="#1f2a33" stroke-width="1.100" stroke-linejoin="round"/><path d="M11.750,9.900 L19.700,3.700 L25.500,7.800 V14.100 L13.500,12.200 Z" fill="url(#fb)" stroke="#14506f" stroke-width="1"/><path d="M3.400,4.500 L11.750,9.900 V26.600" fill="none" stroke="#1f2a33" stroke-width="1"/></svg>
<svg class="b" style="left:164px;top:342px;overflow:visible" width="28" height="28" viewBox="0 0 28 28"><path d="M2.700,4.500 L15.200,0.750 C20,2 23.500,4 24.300,12.800 V21.200 L10.600,26.200 L2.700,18.700 Z" fill="url(#fb)" stroke="#1f2a33" stroke-width="1.100" stroke-linejoin="round"/><path d="M2.700,4.500 L6.800,7 C9,9 10.600,11.500 10.600,14.500 V26.200 L2.700,18.700 Z" fill="url(#fw)" stroke="#1f2a33" stroke-width="1"/><path d="M10.600,14.500 L24.300,12.800" fill="none" stroke="#14506f" stroke-width="1"/></svg>
<svg class="b" style="left:201.5px;top:342px;overflow:visible" width="28" height="28" viewBox="0 0 28 28"><path d="M1,2.400 L19.300,-0.500 C23,0 26,2.500 26.800,6.200 L27.250,19.500 C26,24 20,27 15.200,27 C10,27 6,25 4.300,22.800 L1,19.500 Z" fill="url(#fb)" stroke="#1f2a33" stroke-width="1.100" stroke-linejoin="round"/><path d="M1,2.400 L19.300,-0.500 C23,0 26,2.500 26.800,6.200 C24,8.500 19,9.500 15.200,9.200 C10,9 6.500,8 4.700,7.400 Z" fill="url(#fw)" stroke="#14506f" stroke-width="1"/><path d="M1,2.400 L4.700,7.400 V23 L1,19.500 Z" fill="#ececf0" stroke="#1f2a33" stroke-width="1"/></svg>
<div class="b" style="left:71px;top:385px;width:199px;height:1px;background:#c4c4c4;"></div>
<span class="t" style="left:75px;top:393.25px;font-size:11px;line-height:14px;color:#3a3a3a;font-weight:700;letter-spacing:-0.143px;">Items To Fillet</span>
<svg class="b" style="left:256px;top:396px" width="12" height="8" viewBox="0 0 12 8"><path d="M1.500,6.500 L6,2 L10.500,6.500" fill="none" stroke="#666" stroke-width="1.700"/></svg>
<svg class="b" style="left:79px;top:416px" width="17" height="18" viewBox="0 0 17 18"><path d="M1,5 L7.500,1 L15.500,3.500 V13 L9,17 L1,14 Z" fill="#f4f4f6" stroke="#222" stroke-width="1.100" stroke-linejoin="round"/><path d="M1,5 L4,6 V15.200 L1,14 Z" fill="#4cc4de" stroke="#14506f" stroke-width="0.800"/><path d="M1,5 L9,7.500 L15.500,3.500 M9,7.500 V17" fill="none" stroke="#222" stroke-width="0.900"/></svg>
<div class="b" style="left:105px;top:413.5px;width:151.5px;height:336px;background:#cfe3f8;border:2px solid #58aaec;box-sizing:border-box;"></div>
<div class="b" style="left:237.5px;top:415.5px;width:17px;height:332px;background:#f0f0f0;"></div>
<div class="b" style="left:238.5px;top:535px;width:15.5px;height:185px;background:#c9c9c9;"></div>
<svg class="b" style="left:240px;top:421px" width="12" height="8" viewBox="0 0 12 8"><path d="M1.500,6.500 L6,2 L10.500,6.500" fill="none" stroke="#444" stroke-width="1.700"/></svg>
<svg class="b" style="left:240px;top:735px" width="12" height="8" viewBox="0 0 12 8"><path d="M1.500,1.500 L6,6 L10.500,1.500" fill="none" stroke="#444" stroke-width="1.700"/></svg>
<div class="b" style="left:107px;top:736.5px;width:130.5px;height:11px;background:#0a78d7;"></div>
<span class="t" style="left:108.5px;top:415.5px;font-size:11px;line-height:14px;color:#000;letter-spacing:0.102px;">Edge&lt;12&gt;</span>
<span class="t" style="left:108.5px;top:431.5px;font-size:11px;line-height:14px;color:#000;letter-spacing:0.102px;">Edge&lt;13&gt;</span>
<span class="t" style="left:108.5px;top:447.5px;font-size:11px;line-height:14px;color:#000;letter-spacing:0.102px;">Edge&lt;14&gt;</span>
<span class="t" style="left:108.5px;top:463.5px;font-size:11px;line-height:14px;color:#000;letter-spacing:0.102px;">Edge&lt;15&gt;</span>
<span class="t" style="left:108.5px;top:479.5px;font-size:11px;line-height:14px;color:#000;letter-spacing:0.102px;">Edge&lt;16&gt;</span>
<span class="t" style="left:108.5px;top:495.5px;font-size:11px;line-height:14px;color:#000;letter-spacing:0.102px;">Edge&lt;17&gt;</span>
<span class="t" style="left:108.5px;top:511.5px;font-size:11px;line-height:14px;color:#000;letter-spacing:0.102px;">Edge&lt;18&gt;</span>
<span class="t" style="left:108.5px;top:527.5px;font-size:11px;line-height:14px;color:#000;letter-spacing:0.102px;">Edge&lt;19&gt;</span>
<span class="t" style="left:108.5px;top:543.5px;font-size:11px;line-height:14px;color:#000;letter-spacing:0.102px;">Edge&lt;20&gt;</span>
<span class="t" style="left:108.5px;top:559.5px;font-size:11px;line-height:14px;color:#000;letter-spacing:0.102px;">Edge&lt;21&gt;</span>
<span class="t" style="left:108.5px;top:575.5px;font-size:11px;line-height:14px;color:#000;letter-spacing:0.102px;">Edge&lt;22&gt;</span>
<span class="t" style="left:108.5px;top:591.5px;font-size:11px;line-height:14px;color:#000;letter-spacing:0.102px;">Edge&lt;23&gt;</span>
<span class="t" style="left:108.5px;top:607.5px;font-size:11px;line-height:14px;color:#000;letter-spacing:0.102px;">Edge&lt;24&gt;</span>
<span class="t" style="left:108.5px;top:623.5px;font-size:11px;line-height:14px;color:#000;letter-spacing:0.102px;">Edge&lt;25&gt;</span>
<span class="t" style="left:108.5px;top:639.5px;font-size:11px;line-height:14px;color:#000;letter-spacing:0.102px;">Edge&lt;26&gt;</span>
<span class="t" style="left:108.5px;top:655.5px;font-size:11px;line-height:14px;color:#000;letter-spacing:0.102px;">Edge&lt;27&gt;</span>
<span class="t" style="left:108.5px;top:671.5px;font-size:11px;line-height:14px;color:#000;letter-spacing:0.102px;">Edge&lt;28&gt;</span>
<span class="t" style="left:108.5px;top:687.5px;font-size:11px;line-height:14px;color:#000;letter-spacing:0.102px;">Edge&lt;29&gt;</span>
<span class="t" style="left:108.5px;top:703.5px;font-size:11px;line-height:14px;color:#000;letter-spacing:0.102px;">Edge&lt;30&gt;</span>
<span class="t" style="left:108.5px;top:719.5px;font-size:11px;line-height:14px;color:#000;letter-spacing:0.102px;">Edge&lt;31&gt;</span>
<span class="t" style="left:108.5px;top:735.5px;font-size:11px;line-height:14px;color:#fff;letter-spacing:0.102px;height:12px;overflow:hidden;text-decoration:underline;">Edge&lt;32&gt;</span>
<svg class="b" style="left:177px;top:750px" width="8" height="8" viewBox="0 0 8 8"><circle cx="4" cy="4" r="2.300" fill="#d8d8d8" stroke="#9a9a9a" stroke-width="0.900"/></svg>
<div class="b" style="left:105.4px;top:767.7px;width:12.5px;height:12.5px;background:#fff;border:1px solid #333;box-sizing:border-box;"></div><svg class="b" style="left:105.4px;top:767.7px" width="12" height="12" viewBox="0 0 12 12"><path d="M2.500,6 L5,8.800 L9.800,2.800" fill="none" stroke="#222" stroke-width="1.300"/></svg>
<span class="t" style="left:121.2px;top:767px;font-size:11px;line-height:14px;color:#111;letter-spacing:0.360px;">Show selection toolbar</span>
<div class="b" style="left:105.4px;top:792px;width:12.5px;height:12.5px;background:#fff;border:1px solid #333;box-sizing:border-box;"></div><svg class="b" style="left:105.4px;top:792px" width="12" height="12" viewBox="0 0 12 12"><path d="M2.500,6 L5,8.800 L9.800,2.800" fill="none" stroke="#222" stroke-width="1.300"/></svg>
<span class="t" style="left:121.2px;top:790.75px;font-size:11px;line-height:14px;color:#111;letter-spacing:0.484px;">Tangent propagation</span>
<svg class="b" style="left:104.3px;top:814.8px" width="14" height="14" viewBox="0 0 14 14"><circle cx="7" cy="7" r="5.800" fill="#fff" stroke="#333" stroke-width="1"/><circle cx="7" cy="7" r="3.300" fill="#333"/></svg>
<span class="t" style="left:121.2px;top:815px;font-size:11px;line-height:14px;color:#111;letter-spacing:0.276px;">Full preview</span>
<svg class="b" style="left:104.3px;top:836px" width="14" height="14" viewBox="0 0 14 14"><circle cx="7" cy="7" r="5.800" fill="#fff" stroke="#333" stroke-width="1"/></svg>
<span class="t" style="left:121.2px;top:836px;font-size:11px;line-height:14px;color:#111;letter-spacing:0.191px;">Partial preview</span>
<svg class="b" style="left:104.3px;top:858px" width="14" height="14" viewBox="0 0 14 14"><circle cx="7" cy="7" r="5.800" fill="#fff" stroke="#333" stroke-width="1"/></svg>
<span class="t" style="left:121.2px;top:858px;font-size:11px;line-height:14px;color:#111;letter-spacing:0.297px;">No preview</span>
<div class="b" style="left:71px;top:883px;width:199px;height:1px;background:#c4c4c4;"></div>
<span class="t" style="left:75.7px;top:891px;font-size:11px;line-height:14px;color:#3a3a3a;font-weight:700;letter-spacing:-0.192px;">Fillet Parameters</span>
<svg class="b" style="left:256px;top:893.5px" width="12" height="8" viewBox="0 0 12 8"><path d="M1.500,6.500 L6,2 L10.500,6.500" fill="none" stroke="#666" stroke-width="1.700"/></svg>
<div class="b" style="left:102px;top:911.5px;width:154px;height:20px;background:#e1e1e1;border:1px solid #adadad;box-sizing:border-box;"></div>
<span class="t" style="left:106.5px;top:914.75px;font-size:11px;line-height:14px;color:#111;letter-spacing:-0.161px;">Symmetric</span>
<svg class="b" style="left:240.5px;top:918px" width="12" height="8" viewBox="0 0 12 8"><path d="M1.500,1.500 L6,6 L10.500,1.500" fill="none" stroke="#444" stroke-width="1.700"/></svg>
<div class="b" style="left:102px;top:943px;width:154px;height:20px;background:#fff;border:1px solid #8f8f8f;box-sizing:border-box;"></div>
<span class="t" style="left:104px;top:944.5px;font-size:11px;line-height:14px;color:#111;letter-spacing:-0.125px;">2.00mm</span>
<div class="b" style="left:238px;top:945px;width:16px;height:16px;background:#f0f0f0;border:1px solid #b5b5b5;box-sizing:border-box;"></div>
<div class="b" style="left:238px;top:952.5px;width:16px;height:1px;background:#b5b5b5;"></div>
<svg class="b" style="left:238px;top:945px" width="16" height="16" viewBox="0 0 16 16"><path d="M5.500,5.500 H10.500 L8,2.500 Z M5.500,10.500 H10.500 L8,13.500 Z" fill="#222"/></svg>
<svg class="b" style="left:77px;top:943px" width="20" height="20" viewBox="0 0 20 20"><path d="M2,18 C2,9 8,4 17,3" fill="none" stroke="#2f86c2" stroke-width="1.600"/><path d="M17,17 L8,8 M8,13 V8 H13" fill="none" stroke="#111" stroke-width="1.700"/></svg>
<div class="b" style="left:102.3px;top:973.8px;width:12.5px;height:12.5px;background:#fff;border:1px solid #333;box-sizing:border-box;"></div>
<span class="t" style="left:118.3px;top:973px;font-size:11px;line-height:14px;color:#111;letter-spacing:0.299px;">Multi Radius Fillet</span>
<div class="b" style="left:67px;top:1003px;width:226px;height:1px;background:#cfcfcf;"></div>
<div class="b" style="left:0px;top:0px;width:1920px;height:31px;background:#e9e9e9;"></div>
<div class="b" style="left:0px;top:0px;width:10px;height:31px;background:#e1e1e1;"></div>
<div class="b" style="left:11px;top:0px;width:144px;height:31px;background:linear-gradient(90deg,#fdfdfd 0%,#fbfbfb 70%,#eef2f2 100%);border-left:1px solid #9a9a9a;box-sizing:border-box;"></div>
<div class="b" style="left:0px;top:31px;width:155px;height:1px;background:#8a8a8a;"></div>
<div class="b" style="left:155px;top:0px;width:359px;height:31px;background:#fbfbfb;box-shadow:1px 0 2px rgba(0,0,0,.25);"></div>
<div class="b" style="left:155px;top:31px;width:1765px;height:1px;background:#6a6a6a;"></div>
<div class="b" style="left:155px;top:31px;width:360px;height:1px;background:#222;"></div>
<svg class="b" style="left:14px;top:0px" width="34" height="30" viewBox="14 0 34 30"><g fill="none" stroke="#d9232a" stroke-width="2.400" stroke-linecap="round" stroke-linejoin="round"><path d="M25.600,3 C29,2.600 33,3 35,4.200 C37.500,6.500 33,10 27.500,12.500"/><path d="M20.300,15 C24,14.600 28.500,14.800 30.500,16.200 C33,19 25,24 16.800,27 L27.200,15.200"/><path d="M43,11 C39,10.600 35,10.800 34,12.400 C33,15 40.500,18 40.800,20.600 C40.800,23.500 36,23.600 32.300,22.700"/></g></svg>
<span class="t" style="left:49.4px;top:10.75px;font-size:14.2px;line-height:18px;color:#d9232a;font-weight:700;transform:scaleX(1.0955);transform-origin:0 50%;font-style:italic;">SOLID</span>
<span class="t" style="left:97.5px;top:10.75px;font-size:14.2px;line-height:18px;color:#d9232a;transform:scaleX(0.9513);transform-origin:0 50%;font-style:italic;">WORKS</span>
<span class="t" style="left:183px;top:8px;font-size:12px;line-height:16px;color:#111;letter-spacing:-0.086px;">File</span>
<span class="t" style="left:218px;top:8px;font-size:12px;line-height:16px;color:#111;letter-spacing:-0.172px;">Edit</span>
<span class="t" style="left:253px;top:8px;font-size:12px;line-height:16px;color:#111;letter-spacing:-0.199px;">View</span>
<span class="t" style="left:294px;top:8px;font-size:12px;line-height:16px;color:#111;letter-spacing:-0.003px;">Insert</span>
<span class="t" style="left:339px;top:8px;font-size:12px;line-height:16px;color:#111;letter-spacing:-0.203px;">Tools</span>
<span class="t" style="left:382px;top:8px;font-size:12px;line-height:16px;color:#111;letter-spacing:0.219px;">Window</span>
<span class="t" style="left:442px;top:8px;font-size:12px;line-height:16px;color:#111;letter-spacing:-0.422px;">Help</span>
<svg class="b" style="left:491px;top:8px" width="16" height="16" viewBox="0 0 16 16"><path d="M9,1.5 L14.5,7 L12.5,7.5 L10.5,9.5 L10,13 L3,6 L6.5,5.5 L8.5,3.5 Z" fill="#2d78b5"/><path d="M6,10 L1.5,14.5" stroke="#2d78b5" stroke-width="1.6"/></svg>
<svg class="b" style="left:531px;top:6px" width="20" height="20" viewBox="0 0 20 20"><path d="M1.5,10 L10,2 L18.5,10 M4,9 V18 H16 V9 M8,18 V12 H12 V18" fill="none" stroke="#c2c2c2" stroke-width="1.6"/></svg>
<svg class="b" style="left:557px;top:6px" width="20" height="20" viewBox="0 0 20 20"><path d="M4,1.5 H12 L16,5.5 V18.5 H4 Z" fill="#f4f4f4" stroke="#c2c2c2" stroke-width="1.4"/></svg>
<svg class="b" style="left:582px;top:14px" width="8" height="5" viewBox="0 0 8 5"><path d="M0.5,0.5 L7.5,0.5 L4,4.5 Z" fill="#9a9a9a"/></svg>
<svg class="b" style="left:595px;top:6px" width="20" height="20" viewBox="0 0 20 20"><path d="M1.5,18 V6 H7 L9,8 H15 V10 M1.5,18 L5,10 H19 L15,18 Z" fill="#ececec" stroke="#c2c2c2" stroke-width="1.4"/><path d="M9,2 C12,1 14,3 14,6 M12,5 L14,7 L16,4.5" fill="none" stroke="#c2c2c2" stroke-width="1.3"/></svg>
<svg class="b" style="left:621px;top:14px" width="8" height="5" viewBox="0 0 8 5"><path d="M0.5,0.5 L7.5,0.5 L4,4.5 Z" fill="#9a9a9a"/></svg>
<svg class="b" style="left:635px;top:6px" width="20" height="20" viewBox="0 0 20 20"><path d="M2,2 H18 V18 H2 Z" fill="#d2d2d2" stroke="#c2c2c2" stroke-width="1.4"/><rect x="5" y="2" width="10" height="6" fill="#e8e8e8"/><rect x="6" y="12" width="8" height="6" fill="#bdbdbd"/></svg>
<svg class="b" style="left:660px;top:14px" width="8" height="5" viewBox="0 0 8 5"><path d="M0.5,0.5 L7.5,0.5 L4,4.5 Z" fill="#9a9a9a"/></svg>
<svg class="b" style="left:674px;top:6px" width="20" height="20" viewBox="0 0 20 20"><rect x="5" y="1.5" width="10" height="7" fill="#fff" stroke="#555" stroke-width="1"/><path d="M1.5,8.5 H18.5 V15 H1.5 Z" fill="#1f7fb8" stroke="#12415f" stroke-width="1"/><rect x="4" y="13" width="12" height="5.5" fill="#e8f2fa" stroke="#12415f" stroke-width="1"/><rect x="3" y="10.5" width="14" height="1.5" fill="#9fd0ee"/></svg>
<svg class="b" style="left:699px;top:14px" width="8" height="5" viewBox="0 0 8 5"><path d="M0.5,0.5 L7.5,0.5 L4,4.5 Z" fill="#222"/></svg>
<svg class="b" style="left:712px;top:6px" width="20" height="20" viewBox="0 0 20 20"><path d="M3,4 V10 H9 M3.5,9.5 C6,4 14,3 15,9 C15.5,13 13,15 11,17" fill="none" stroke="#c2c2c2" stroke-width="2.6"/></svg>
<svg class="b" style="left:738px;top:14px" width="8" height="5" viewBox="0 0 8 5"><path d="M0.5,0.5 L7.5,0.5 L4,4.5 Z" fill="#9a9a9a"/></svg>
<svg class="b" style="left:752px;top:6px" width="20" height="20" viewBox="0 0 20 20"><path d="M5,1.5 L5,15 L8.5,12 L11,18 L13,17 L10.5,11.5 L15,11.5 Z" fill="#f6f6f6" stroke="#c2c2c2" stroke-width="1.3"/></svg>
<svg class="b" style="left:777px;top:14px" width="8" height="5" viewBox="0 0 8 5"><path d="M0.5,0.5 L7.5,0.5 L4,4.5 Z" fill="#9a9a9a"/></svg>
<svg class="b" style="left:791px;top:6px" width="20" height="20" viewBox="0 0 20 20"><rect x="6" y="1.5" width="8" height="17" rx="4" fill="#cfcfcf" stroke="#c2c2c2" stroke-width="1.2"/><circle cx="10" cy="6" r="2" fill="#bbb"/><circle cx="10" cy="13" r="2" fill="#bbb"/></svg>
<svg class="b" style="left:817px;top:6px" width="20" height="20" viewBox="0 0 20 20"><rect x="2.5" y="1.5" width="15" height="17" fill="#f3f3f3" stroke="#c2c2c2" stroke-width="1.3"/><path d="M4.5,5 H7.5 M4.5,10 H7.5 M4.5,15 H7.5 M9.5,5 H16 M9.5,10 H16 M9.5,15 H16" stroke="#c2c2c2" stroke-width="1.6"/></svg>
<svg class="b" style="left:843px;top:6px" width="20" height="20" viewBox="0 0 20 20"><circle cx="10" cy="10" r="6.4" fill="none" stroke="#222" stroke-width="2.6" stroke-dasharray="2.5 2.53"/><circle cx="10" cy="10" r="5.4" fill="#e9e9e9" stroke="#222" stroke-width="1.1"/><circle cx="10" cy="10" r="2.4" fill="none" stroke="#222" stroke-width="1.1"/></svg>
<svg class="b" style="left:868px;top:14px" width="8" height="5" viewBox="0 0 8 5"><path d="M0.5,0.5 L7.5,0.5 L4,4.5 Z" fill="#222"/></svg>
<div class="b" style="left:1155px;top:4px;width:350px;height:24.5px;background:#1d2530;"></div>
<svg class="b" style="left:1155px;top:4px" width="350" height="24" viewBox="0 0 350 24"><g fill="none" stroke="#fff" stroke-width="1.4"><path d="M7,9 H18 L12.5,16 Z" fill="#e8e8e8" stroke="none"/><rect x="30.5" y="9.5" width="8" height="8"/><rect x="34.5" y="5.500" width="8" height="8" fill="#1d2530"/><circle cx="58" cy="11" r="4.2" stroke-width="2"/><path d="M61,14.500 L65,18.500" stroke-width="2.4"/><path d="M79,16 V7 H89" /><path d="M79,16 H91 V8" stroke-dasharray="1.2 1.6"/><path d="M76.500,16.500 L79,19.500 L81.500,16.500 M88.500,4.500 L91.500,7 L88.500,9.500" stroke-width="1.2"/></g><circle cx="223" cy="12" r="6.8" fill="#e62e2e"/><rect x="270" y="1" width="23" height="23" fill="#3c8ad8"/><path d="M277,12 a5,5 0 1 1 5,5" stroke="#4f9bea" stroke-width="2" fill="none"/><path d="M295.500,6 V18 M324,6 V18" stroke="#4a5360" stroke-width="1"/><path d="M301,18.500 L302,14.500 L310.500,6 L313.500,9 L305,17.500 Z" fill="#f2f2f2"/><path d="M333,7.500 L342,16.500 M342,7.500 L333,16.500" stroke="#f0f0f0" stroke-width="1.3"/></svg>
<span class="t" style="left:1281px;top:9.25px;font-size:12px;line-height:15px;color:#fff;letter-spacing:-0.186px;">Fullscreen</span>
<span class="t" style="left:1390px;top:9.25px;font-size:12px;line-height:15px;color:#fff;letter-spacing:-0.115px;">REC</span>
<svg class="b" style="left:1440px;top:16px" width="14" height="21" viewBox="0 0 14 21"><path d="M1,1 V16 L4.500,12.800 L7.200,19 L9.800,17.900 L7.200,12 L12,12 Z" fill="#fff" stroke="#000" stroke-width="1"/></svg>
<div class="b" style="left:1571px;top:4px;width:202px;height:22.5px;background:#f3f3f5;border:1.5px solid #1a1a1a;box-sizing:border-box;"></div>
<svg class="b" style="left:1576px;top:7px" width="17" height="16" viewBox="0 0 17 16"><rect x="0.7" y="0.7" width="15.600" height="14.600" fill="#111" stroke="#888" stroke-width="1"/><path d="M4,4 L8.500,7.800 L4,11.500 M9,12.500 H13" stroke="#fff" stroke-width="1.5" fill="none"/></svg>
<span class="t" style="left:1598.5px;top:8px;font-size:12px;line-height:16px;color:#7a7a7a;letter-spacing:-0.615px;">Search Commands</span>
<svg class="b" style="left:1739px;top:6px" width="20" height="19" viewBox="0 0 20 19"><circle cx="12" cy="7" r="5.300" fill="#fdfdfd" stroke="#7d9ab8" stroke-width="1.3"/><path d="M8,11 L2,17.500" stroke="#7d9ab8" stroke-width="2.2" stroke-linecap="round"/></svg>
<svg class="b" style="left:1762.5px;top:14.5px" width="8" height="5" viewBox="0 0 8 5"><path d="M0.5,0.5 L7.5,0.5 L4,4.5 Z" fill="#222"/></svg>
<svg class="b" style="left:1782px;top:6px" width="16" height="20" viewBox="0 0 16 20"><circle cx="8" cy="5.500" r="4" fill="#e8e6e2" stroke="#9a9894" stroke-width="1"/><path d="M1.500,18.500 V14 C1.500,10 5,9.500 8,9.500 C11,9.500 14.500,10 14.500,14 V18.500 Z" fill="#e8e6e2" stroke="#9a9894" stroke-width="1"/></svg>
<span class="t" style="left:1810px;top:3.5px;font-size:19px;line-height:24px;color:#222;font-weight:700;">?</span>
<svg class="b" style="left:1830.5px;top:13.5px" width="8" height="5" viewBox="0 0 8 5"><path d="M0.5,0.5 L7.5,0.5 L4,4.5 Z" fill="#222"/></svg>
<div class="b" style="left:1850px;top:18.5px;width:10.5px;height:3px;background:#222;"></div>
<svg class="b" style="left:1873px;top:9px" width="15" height="13" viewBox="0 0 15 13"><path d="M4.500,3.500 V1 H14 V8.500 H11" fill="none" stroke="#222" stroke-width="1.6"/><rect x="1" y="4.300" width="9.500" height="7.500" fill="none" stroke="#222" stroke-width="1.600"/></svg>
<svg class="b" style="left:1901px;top:10px" width="12" height="12" viewBox="0 0 12 12"><path d="M1,1 L11,11 M11,1 L1,11" stroke="#222" stroke-width="1.700"/></svg>
<div class="b" style="left:0px;top:32px;width:1920px;height:31px;background:#f7f7f7;"></div>
<div class="b" style="left:0px;top:63px;width:1920px;height:1px;background:#747474;"></div>
<div class="b" style="left:335px;top:32px;width:1px;height:31px;background:#bdbdbd;"></div>
<div class="b" style="left:0px;top:63px;width:336px;height:1px;background:#8a8a8a;"></div>
<svg class="b" style="left:2px;top:35px" width="4" height="26" viewBox="0 0 4 26"><path d="M2,1 V26" stroke="#9a9a9a" stroke-width="1.600" stroke-dasharray="1.5 2"/></svg>
<div class="b" style="left:43px;top:36px;width:1px;height:22px;background:#b5b5b5;"></div>
<div class="b" style="left:294px;top:36px;width:1px;height:22px;background:#b5b5b5;"></div>
<svg class="b" style="left:17px;top:37px" width="20" height="20" viewBox="0 0 20 20"><path d="M1,15 L8,12 L19,15 L11,18.500 Z" fill="#4aa3d6" stroke="#1c6b9a" stroke-width="0.800"/><path d="M10,15 V3 M7,6 L10,2 L13,6" fill="none" stroke="#111" stroke-width="1.600"/></svg>
<svg width="0" height="0" style="position:absolute"><defs><linearGradient id="cg" x1="0" y1="0" x2="1" y2="1"><stop offset="0" stop-color="#8fd0ee"/><stop offset="1" stop-color="#1f86bd"/></linearGradient></defs></svg>
<div class="b" style="left:212px;top:34px;width:26px;height:26px;background:#a8a8a8;border:1px solid #7a7a7a;box-sizing:border-box;"></div>
<svg class="b" style="left:51px;top:37px" width="20" height="20" viewBox="0 0 20 20"><path d="M2,6 L6,2 H18 V14 L14,18" fill="#fff" stroke="#1a1a1a" stroke-width="1"/><rect x="2" y="6" width="12" height="12" fill="url(#cg)" stroke="#1a1a1a"/><path d="M14,6 L18,2" stroke="#1a1a1a"/></svg>
<svg class="b" style="left:78px;top:37px" width="20" height="20" viewBox="0 0 20 20"><rect x="6" y="2" width="12" height="12" fill="url(#cg)" stroke="#1a1a1a"/><path d="M2,6 H14 V18 H2 Z M2,6 L6,2 M14,6 L18,2 M14,18 L18,14 M2,18 L6,14" fill="none" stroke="#1a1a1a"/></svg>
<svg class="b" style="left:105px;top:37px" width="20" height="20" viewBox="0 0 20 20"><path d="M2,6 L6,2 V14 L2,18 Z" fill="url(#cg)" stroke="#1a1a1a"/><path d="M6,2 H18 V14 H6 M2,6 H14 V18 H2 M14,6 L18,2 M14,18 L18,14" fill="none" stroke="#1a1a1a"/></svg>
<svg class="b" style="left:132px;top:37px" width="20" height="20" viewBox="0 0 20 20"><path d="M6,2 H18 V14 H6 Z M2,6 H14 V18 H2 Z M2,6 L6,2 M2,18 L6,14" fill="none" stroke="#1a1a1a"/><path d="M14,6 L18,2 V14 L14,18 Z" fill="url(#cg)" stroke="#1a1a1a"/></svg>
<svg class="b" style="left:159px;top:37px" width="20" height="20" viewBox="0 0 20 20"><path d="M6,2 H18 V14 H6 Z M2,6 H14 V18 H2 Z M2,18 L6,14 M14,18 L18,14" fill="none" stroke="#1a1a1a"/><path d="M2,6 L6,2 H18 L14,6 Z" fill="url(#cg)" stroke="#1a1a1a"/></svg>
<svg class="b" style="left:186px;top:37px" width="20" height="20" viewBox="0 0 20 20"><path d="M6,2 H18 V14 H6 Z M2,6 H14 V18 H2 Z M2,6 L6,2 M14,6 L18,2" fill="none" stroke="#1a1a1a"/><path d="M2,18 L6,14 H18 L14,18 Z" fill="url(#cg)" stroke="#1a1a1a"/></svg>
<svg class="b" style="left:215px;top:37px" width="20" height="20" viewBox="0 0 20 20"><path d="M10,1.500 L18,5.500 V14.500 L10,18.500 L2,14.500 V5.500 Z" fill="#3aa0d2" stroke="#15506f"/><path d="M2,5.500 L10,9.500 L18,5.500 M10,9.500 V18.500" fill="none" stroke="#15506f"/><path d="M10,1.500 L18,5.500 L10,9.500 L2,5.500 Z" fill="#8fd0ee" stroke="#15506f"/></svg>
<svg class="b" style="left:241px;top:37px" width="20" height="20" viewBox="0 0 20 20"><path d="M8,2 L18,4.500 V15 L10,18.500 L2,15 V5.500 Z" fill="#3293c6" stroke="#15506f"/><path d="M2,5.500 L10,8.500 L18,4.500 M10,8.500 V18.500" fill="none" stroke="#15506f"/><path d="M8,2 L18,4.500 L10,8.500 L2,5.500 Z" fill="#8fd0ee" stroke="#15506f"/></svg>
<svg class="b" style="left:268px;top:37px" width="20" height="20" viewBox="0 0 20 20"><path d="M5,2.500 L17,2 V16 L6,18.500 L3,16.500 V4.500 Z" fill="#3293c6" stroke="#15506f"/><path d="M3,4.500 L6,6 L17,5 M6,6 V18.500" fill="none" stroke="#15506f"/><path d="M5,2.500 L17,2 L17,5 L6,6 L3,4.500Z" fill="#8fd0ee" stroke="#15506f"/></svg>
<svg class="b" style="left:303px;top:37px" width="20" height="20" viewBox="0 0 20 20"><g transform="rotate(-45 10 10)"><rect x="2" y="7" width="7" height="6" rx="1.500" fill="#c9c9c9" stroke="#444" stroke-width="1"/><rect x="9" y="6" width="6" height="8" fill="#9f9f9f" stroke="#444" stroke-width="1"/><rect x="15" y="7.500" width="3.500" height="5" fill="#e8e8e8" stroke="#444" stroke-width="1"/></g></svg>
<div class="b" style="left:0px;top:64px;width:1920px;height:82px;background:#f7f7f7;"></div>
<div class="b" style="left:1919px;top:64px;width:1px;height:82px;background:#9a9a9a;"></div>
<svg class="b" style="left:24px;top:75px" width="24" height="24" viewBox="0 0 22 22"><path d="M3,9 L9,6 L15,9 V17 L9,20 L3,17 Z" fill="#e4e4e4" stroke="#c6c6c6" stroke-width="1.500"/><path d="M9,3.500 L16,2 L19,4 V15 L15,17 V9 L9,6 Z" fill="#f0f0f0" stroke="#c6c6c6" stroke-width="1.500"/><path d="M3,9 L9,12 L15,9 M9,12 V20" fill="none" stroke="#c6c6c6" stroke-width="1.200"/></svg>
<span class="t" style="left:13.25px;top:97px;font-size:11px;line-height:14px;color:#b2b2b2;letter-spacing:0.184px;">Extruded</span>
<span class="t" style="left:11.25px;top:110px;font-size:11px;line-height:14px;color:#b2b2b2;letter-spacing:-0.344px;">Boss/Base</span>
<svg class="b" style="left:84px;top:75px" width="24" height="24" viewBox="0 0 22 22"><path d="M5,8 C5,2.500 18,2.500 18,8 C18,12 11,12 11,9.500 C11,8 14,8 14,9 M5,8 C5,12 8,13 9,13 C5,14 5,19 11,19.500 C17,19.500 19,16 18,12" fill="#e4e4e4" stroke="#c6c6c6" stroke-width="1.800"/></svg>
<span class="t" style="left:73.25px;top:97px;font-size:11px;line-height:14px;color:#b2b2b2;letter-spacing:-0.045px;">Revolved</span>
<span class="t" style="left:71.25px;top:110px;font-size:11px;line-height:14px;color:#b2b2b2;letter-spacing:-0.344px;">Boss/Base</span>
<svg class="b" style="left:129px;top:69px" width="18" height="18" viewBox="0 0 18 18"><path d="M2.500,13.500 C2.500,8 7,10 8,6.500 C9,2 16,2 16,6 C16,9 12,8.500 11.500,7 C10,9 11,11 9,13 C7.500,16.500 2.500,16.500 2.500,13.500Z" fill="#e4e4e4" stroke="#c6c6c6" stroke-width="1.500"/></svg>
<span class="t" style="left:154px;top:71px;font-size:11px;line-height:14px;color:#b2b2b2;letter-spacing:-0.115px;">Swept Boss/Base</span>
<svg class="b" style="left:129px;top:95px" width="18" height="18" viewBox="0 0 18 18"><path d="M6,3 C6,1.500 12,1.500 12,3 V10 L14.500,13 L9,16.500 L3.500,13 L6,10 Z" fill="#d8d8d8" stroke="#c6c6c6" stroke-width="1.400"/><path d="M6,3 C6,4.500 12,4.500 12,3" fill="none" stroke="#c6c6c6"/></svg>
<span class="t" style="left:154px;top:97px;font-size:11px;line-height:14px;color:#b2b2b2;letter-spacing:-0.015px;">Lofted Boss/Base</span>
<svg class="b" style="left:129px;top:121px" width="18" height="18" viewBox="0 0 18 18"><path d="M2.500,7 L8,3.500 L15.500,6 V13 L10,16 L2.500,13 Z" fill="#e4e4e4" stroke="#c6c6c6" stroke-width="1.400"/><path d="M2.500,7 L10,9.500 L15.500,6 M10,9.500 V16" fill="none" stroke="#c6c6c6" stroke-width="1.100"/><path d="M6,5 L9,6 V9" fill="none" stroke="#c6c6c6" stroke-width="1.100"/></svg>
<span class="t" style="left:154px;top:123px;font-size:11px;line-height:14px;color:#b2b2b2;letter-spacing:-0.041px;">Boundary Boss/Base</span>
<div class="b" style="left:267px;top:66px;width:1px;height:77px;background:#dadada;"></div>
<svg class="b" style="left:285px;top:75px" width="24" height="24" viewBox="0 0 22 22"><path d="M4,7 L12,4 L18,6.500 V17 L10.500,20 L4,17 Z" fill="#e4e4e4" stroke="#c6c6c6" stroke-width="1.600"/><path d="M8,8.500 L14.500,7.500 V15 L8,16.500 Z" fill="#f0f0f0" stroke="#c6c6c6" stroke-width="1.300"/><path d="M10.500,10 H12.500 V13 H10.500 Z" fill="none" stroke="#c6c6c6" stroke-width="1"/></svg>
<span class="t" style="left:274.5px;top:97px;font-size:11px;line-height:14px;color:#b2b2b2;letter-spacing:0.121px;">Extruded</span>
<span class="t" style="left:288.25px;top:110px;font-size:11px;line-height:14px;color:#b2b2b2;letter-spacing:0.125px;">Cut</span>
<svg class="b" style="left:336px;top:68px" width="24" height="24" viewBox="0 0 22 22"><path d="M4,8 L11,4 L17,7 V16 L10,20 L4,17 Z" fill="#e4e4e4" stroke="#c6c6c6" stroke-width="1.600"/><circle cx="10.500" cy="11.500" r="3.200" fill="#f0f0f0" stroke="#c6c6c6" stroke-width="1.300"/><path d="M14,3 L18.500,7.500" stroke="#c6c6c6" stroke-width="2.200"/></svg>
<span class="t" style="left:336.25px;top:90px;font-size:11px;line-height:14px;color:#b2b2b2;letter-spacing:0.219px;">Hole</span>
<span class="t" style="left:330.5px;top:103px;font-size:11px;line-height:14px;color:#b2b2b2;letter-spacing:0.128px;">Wizard</span>
<svg class="b" style="left:344px;top:130px" width="8" height="5" viewBox="0 0 8 5"><path d="M0.5,0.5 L7.5,0.5 L4,4.5 Z" fill="#8a8a8a"/></svg>
<svg class="b" style="left:387px;top:75px" width="24" height="24" viewBox="0 0 22 22"><path d="M4,7 C4,4 9,3.500 11,5 C13,3.500 18,4 18,7 V17 L11,20 L4,17 Z" fill="#e4e4e4" stroke="#c6c6c6" stroke-width="1.600"/><path d="M8,9 L11,7.500 L14,9 V19 M8,9 V18.500 M11,7.500 V14" fill="none" stroke="#c6c6c6" stroke-width="1.300"/></svg>
<span class="t" style="left:376.5px;top:97px;font-size:11px;line-height:14px;color:#b2b2b2;letter-spacing:-0.107px;">Revolved</span>
<span class="t" style="left:390.25px;top:110px;font-size:11px;line-height:14px;color:#b2b2b2;letter-spacing:0.125px;">Cut</span>
<svg class="b" style="left:430px;top:69px" width="18" height="18" viewBox="0 0 18 18"><path d="M2.500,7 L8,3.500 L15.500,6 V13 L10,16 L2.500,13 Z" fill="#e4e4e4" stroke="#c6c6c6" stroke-width="1.400"/><path d="M2.500,7 L10,9.500 L15.500,6 M10,9.500 V16" fill="none" stroke="#c6c6c6" stroke-width="1.100"/><path d="M6,5 L9,6 V9" fill="none" stroke="#c6c6c6" stroke-width="1.100"/></svg>
<span class="t" style="left:455px;top:71px;font-size:11px;line-height:14px;color:#b2b2b2;letter-spacing:0.194px;">Swept Cut</span>
<svg class="b" style="left:430px;top:95px" width="18" height="18" viewBox="0 0 18 18"><path d="M2.500,7 L8,3.500 L15.500,6 V13 L10,16 L2.500,13 Z" fill="#e4e4e4" stroke="#c6c6c6" stroke-width="1.400"/><path d="M2.500,7 L10,9.500 L15.500,6 M10,9.500 V16" fill="none" stroke="#c6c6c6" stroke-width="1.100"/><path d="M6,5 L9,6 V9" fill="none" stroke="#c6c6c6" stroke-width="1.100"/></svg>
<span class="t" style="left:455px;top:97px;font-size:11px;line-height:14px;color:#b2b2b2;letter-spacing:0.273px;">Lofted Cut</span>
<svg class="b" style="left:430px;top:121px" width="18" height="18" viewBox="0 0 18 18"><path d="M2.500,7 L8,3.500 L15.500,6 V13 L10,16 L2.500,13 Z" fill="#e4e4e4" stroke="#c6c6c6" stroke-width="1.400"/><path d="M2.500,7 L10,9.500 L15.500,6 M10,9.500 V16" fill="none" stroke="#c6c6c6" stroke-width="1.100"/><path d="M6,5 L9,6 V9" fill="none" stroke="#c6c6c6" stroke-width="1.100"/></svg>
<span class="t" style="left:455px;top:123px;font-size:11px;line-height:14px;color:#b2b2b2;letter-spacing:0.228px;">Boundary Cut</span>
<div class="b" style="left:535px;top:66px;width:1px;height:77px;background:#dadada;"></div>
<svg class="b" style="left:543px;top:68px" width="24" height="24" viewBox="0 0 22 22"><path d="M4,7 L12,4 L18,6.500 V17 L10.500,20 L4,17 Z" fill="#e4e4e4" stroke="#c6c6c6" stroke-width="1.600"/><path d="M8,8.500 L14.500,7.500 V15 L8,16.500 Z" fill="#f0f0f0" stroke="#c6c6c6" stroke-width="1.300"/><path d="M10.500,10 H12.500 V13 H10.500 Z" fill="none" stroke="#c6c6c6" stroke-width="1"/></svg>
<span class="t" style="left:543px;top:90px;font-size:11px;line-height:14px;color:#b2b2b2;letter-spacing:0.128px;">Fillet</span>
<svg class="b" style="left:551px;top:130px" width="8" height="5" viewBox="0 0 8 5"><path d="M0.5,0.5 L7.5,0.5 L4,4.5 Z" fill="#8a8a8a"/></svg>
<svg class="b" style="left:585px;top:69px" width="22" height="22" viewBox="0 0 18 18"><path d="M3,3 H8 V8 H3 Z M13,3 H18 V8 H13 Z M3,13 H8 V18 H3 Z M13,13 H18 V18 H13 Z" fill="#f0f0f0" stroke="#c6c6c6" stroke-width="1.300"/><path d="M8,5.500 H13 M5.500,8 V13" fill="none" stroke="#c6c6c6" stroke-width="1.300" stroke-dasharray="1.500 1"/></svg>
<span class="t" style="left:581px;top:90px;font-size:11px;line-height:14px;color:#b2b2b2;letter-spacing:-0.096px;">Linear</span>
<span class="t" style="left:578px;top:103px;font-size:11px;line-height:14px;color:#b2b2b2;letter-spacing:0.076px;">Pattern</span>
<svg class="b" style="left:592px;top:130px" width="8" height="5" viewBox="0 0 8 5"><path d="M0.5,0.5 L7.5,0.5 L4,4.5 Z" fill="#8a8a8a"/></svg>
<svg class="b" style="left:623px;top:69px" width="18" height="18" viewBox="0 0 18 18"><path d="M2.500,7 L8,3.500 L15.500,6 V13 L10,16 L2.500,13 Z" fill="#e4e4e4" stroke="#c6c6c6" stroke-width="1.400"/><path d="M2.500,7 L10,9.500 L15.500,6 M10,9.500 V16" fill="none" stroke="#c6c6c6" stroke-width="1.100"/><path d="M6,5 L9,6 V9" fill="none" stroke="#c6c6c6" stroke-width="1.100"/></svg>
<span class="t" style="left:648px;top:71px;font-size:11px;line-height:14px;color:#b2b2b2;letter-spacing:-0.172px;">Rib</span>
<svg class="b" style="left:623px;top:95px" width="18" height="18" viewBox="0 0 18 18"><path d="M2.500,7 L8,3.500 L15.500,6 V13 L10,16 L2.500,13 Z" fill="#e4e4e4" stroke="#c6c6c6" stroke-width="1.400"/><path d="M2.500,7 L10,9.500 L15.500,6 M10,9.500 V16" fill="none" stroke="#c6c6c6" stroke-width="1.100"/><path d="M6,5 L9,6 V9" fill="none" stroke="#c6c6c6" stroke-width="1.100"/></svg>
<span class="t" style="left:648px;top:97px;font-size:11px;line-height:14px;color:#b2b2b2;letter-spacing:0.331px;">Draft</span>
<svg class="b" style="left:623px;top:121px" width="18" height="18" viewBox="0 0 18 18"><path d="M2.500,7 L8,3.500 L15.500,6 V13 L10,16 L2.500,13 Z" fill="#e4e4e4" stroke="#c6c6c6" stroke-width="1.400"/><path d="M2.500,7 L10,9.500 L15.500,6 M10,9.500 V16" fill="none" stroke="#c6c6c6" stroke-width="1.100"/><path d="M6,5 L9,6 V9" fill="none" stroke="#c6c6c6" stroke-width="1.100"/></svg>
<span class="t" style="left:648px;top:123px;font-size:11px;line-height:14px;color:#b2b2b2;letter-spacing:0.006px;">Shell</span>
<svg class="b" style="left:687px;top:69px" width="18" height="18" viewBox="0 0 18 18"><path d="M2.500,7 L8,3.500 L15.500,6 V13 L10,16 L2.500,13 Z" fill="#e4e4e4" stroke="#c6c6c6" stroke-width="1.400"/><path d="M2.500,7 L10,9.500 L15.500,6 M10,9.500 V16" fill="none" stroke="#c6c6c6" stroke-width="1.100"/><path d="M6,5 L9,6 V9" fill="none" stroke="#c6c6c6" stroke-width="1.100"/></svg>
<span class="t" style="left:712px;top:71px;font-size:11px;line-height:14px;color:#b2b2b2;letter-spacing:0.227px;">Wrap</span>
<svg class="b" style="left:687px;top:95px" width="18" height="18" viewBox="0 0 18 18"><path d="M2.500,7 L8,3.500 L15.500,6 V13 L10,16 L2.500,13 Z" fill="#e4e4e4" stroke="#c6c6c6" stroke-width="1.400"/><path d="M2.500,7 L10,9.500 L15.500,6 M10,9.500 V16" fill="none" stroke="#c6c6c6" stroke-width="1.100"/><path d="M6,5 L9,6 V9" fill="none" stroke="#c6c6c6" stroke-width="1.100"/></svg>
<span class="t" style="left:712px;top:97px;font-size:11px;line-height:14px;color:#b2b2b2;letter-spacing:0.146px;">Intersect</span>
<svg class="b" style="left:687px;top:121px" width="18" height="18" viewBox="0 0 18 18"><path d="M2.500,5 H7 V15 H2.500 Z M13,5 H17.500 V15 H13 Z" fill="#f0f0f0" stroke="#c6c6c6" stroke-width="1.300"/><path d="M10,2 V18 M7,10 H13" fill="none" stroke="#c6c6c6" stroke-width="1.300"/></svg>
<span class="t" style="left:712px;top:123px;font-size:11px;line-height:14px;color:#b2b2b2;letter-spacing:0.547px;">Mirror</span>
<div class="b" style="left:767px;top:66px;width:1px;height:77px;background:#dadada;"></div>
<svg class="b" style="left:788px;top:69px" width="22" height="22" viewBox="0 0 18 18"><path d="M8.500,6 L14.500,3.500 V14 L8.500,17 Z" fill="#e4e4e4" stroke="#c6c6c6" stroke-width="1.300"/><path d="M4.500,3 V9 M2.500,5 H6.500" stroke="#c6c6c6" stroke-width="1.600"/></svg>
<span class="t" style="left:774.25px;top:90px;font-size:11px;line-height:14px;color:#b2b2b2;letter-spacing:-0.141px;">Reference</span>
<span class="t" style="left:775px;top:103px;font-size:11px;line-height:14px;color:#b2b2b2;letter-spacing:-0.037px;">Geometry</span>
<svg class="b" style="left:795px;top:130px" width="8" height="5" viewBox="0 0 8 5"><path d="M0.5,0.5 L7.5,0.5 L4,4.5 Z" fill="#8a8a8a"/></svg>
<svg class="b" style="left:841px;top:69px" width="22" height="22" viewBox="0 0 18 18"><path d="M7,3 C4.500,8.500 13,7.500 11,12.500 C10,16.500 5.500,16.500 6,13 M12.500,2.500 C13.500,5 12,7 11,8" fill="none" stroke="#c6c6c6" stroke-width="1.600"/></svg>
<span class="t" style="left:835.75px;top:90px;font-size:11px;line-height:14px;color:#b2b2b2;letter-spacing:-0.391px;">Curves</span>
<svg class="b" style="left:847px;top:130px" width="8" height="5" viewBox="0 0 8 5"><path d="M0.5,0.5 L7.5,0.5 L4,4.5 Z" fill="#8a8a8a"/></svg>
<div class="b" style="left:877px;top:65px;width:60px;height:78px;background:#b1b1b1;border:1px solid #6a6a6a;box-sizing:border-box;"></div>
<svg class="b" style="left:895px;top:76px" width="24" height="22" viewBox="0 0 24 22"><path d="M6,2.500 L20,8 V14 L6,8.500 Z" fill="#f7dc4a" stroke="#b08a10" stroke-width="0.600"/><path d="M6,2.500 L20,8 V9.800 L6,4.300 Z" fill="#222"/><path d="M8.500,4 V6.500 M11.500,5.200 V7.700 M14.500,6.400 V8.900 M17.500,7.600 V10.100" stroke="#222" stroke-width="1.300"/><path d="M2.500,10 L15,15.800" stroke="#2f6fa8" stroke-width="2.400"/><path d="M21,19 L11.500,18.600 L15.500,12.600 Z" fill="#2f6fa8"/></svg>
<span class="t" style="left:882px;top:97px;font-size:11px;line-height:14px;color:#000;letter-spacing:0.212px;">Instant3D</span>
<div class="b" style="left:0px;top:146px;width:1920px;height:22px;background:#f5f5f5;"></div>
<div class="b" style="left:741px;top:145px;width:1179px;height:1px;background:#8a8a8a;"></div>
<div class="b" style="left:63px;top:145px;width:679px;height:23px;background:#d0d0d0;border:1px solid #8a8a8a;box-sizing:border-box;"></div>
<div class="b" style="left:119px;top:147px;width:1px;height:20px;background:#8f8f8f;"></div>
<div class="b" style="left:179px;top:147px;width:1px;height:20px;background:#8f8f8f;"></div>
<div class="b" style="left:286px;top:147px;width:1px;height:20px;background:#8f8f8f;"></div>
<div class="b" style="left:419px;top:147px;width:1px;height:20px;background:#8f8f8f;"></div>
<div class="b" style="left:475px;top:147px;width:1px;height:20px;background:#8f8f8f;"></div>
<div class="b" style="left:596px;top:147px;width:1px;height:20px;background:#8f8f8f;"></div>
<div class="b" style="left:0px;top:167px;width:64px;height:1px;background:#8a8a8a;"></div>
<span class="t" style="left:8.5px;top:149px;font-size:12.5px;line-height:16px;color:#111;font-weight:700;letter-spacing:-0.639px;">Features</span>
<span class="t" style="left:74.25px;top:149px;font-size:12.5px;line-height:16px;color:#111;letter-spacing:-0.620px;">Sketch</span>
<span class="t" style="left:128.25px;top:149px;font-size:12.5px;line-height:16px;color:#111;letter-spacing:-0.613px;">Evaluate</span>
<span class="t" style="left:188.25px;top:149px;font-size:12.5px;line-height:16px;color:#111;letter-spacing:-0.433px;">MBD Dimensions</span>
<span class="t" style="left:295.25px;top:149px;font-size:12.5px;line-height:16px;color:#111;letter-spacing:-0.770px;">SOLIDWORKS Add-Ins</span>
<span class="t" style="left:435.25px;top:149px;font-size:12.5px;line-height:16px;color:#111;letter-spacing:-0.844px;">MBD</span>
<span class="t" style="left:484px;top:149px;font-size:12.5px;line-height:16px;color:#111;letter-spacing:-1.036px;">SOLIDWORKS CAM</span>
<span class="t" style="left:605.5px;top:149px;font-size:12.5px;line-height:16px;color:#111;letter-spacing:-0.979px;">SOLIDWORKS CAM TBM</span>
<div class="b" style="left:742px;top:146px;width:1177px;height:22px;background:#fdfdfd;"></div>
<svg class="b" style="left:931px;top:151px" width="20" height="20" viewBox="0 0 20 20"><circle cx="12" cy="8" r="5.500" fill="#f3f7fb" stroke="#7d9ab8" stroke-width="1.300"/><path d="M8,12 L3,17.500" stroke="#6b9ac4" stroke-width="2.600" stroke-linecap="round"/><path d="M12,5 V11 M9,8 H15" stroke="#555" stroke-width="0.900"/></svg>
<svg class="b" style="left:957px;top:151px" width="20" height="20" viewBox="0 0 20 20"><circle cx="12" cy="8" r="5.500" fill="#f3f7fb" stroke="#7d9ab8" stroke-width="1.300"/><path d="M8,12 L3,17.500" stroke="#6b9ac4" stroke-width="2.600" stroke-linecap="round"/><rect x="7.500" y="2.500" width="10" height="10" fill="none" stroke="#444" stroke-width="0.900" stroke-dasharray="2 1.500"/></svg>
<svg class="b" style="left:983px;top:151px" width="20" height="20" viewBox="0 0 20 20"><g transform="rotate(-30 10 10)"><rect x="3" y="7" width="14" height="6" rx="2" fill="#d6d6d6" stroke="#777" stroke-width="1"/><rect x="1.500" y="6" width="4" height="8" rx="1" fill="#bcbcbc" stroke="#777"/></g><path d="M18,15 H11 M13.500,12.500 L11,15 L13.500,17.500" fill="none" stroke="#2f7fbf" stroke-width="1.800"/></svg>
<svg class="b" style="left:1009px;top:151px" width="20" height="20" viewBox="0 0 20 20"><path d="M3,6 L9,4 L17,6 V15 L11,17 L3,15 Z" fill="#efefef" stroke="#d5d5d5" stroke-width="1"/><path d="M9,4 V14 M6,5 V15 M13,5 V16" stroke="#dcdcdc"/></svg>
<svg class="b" style="left:1035px;top:151px" width="20" height="20" viewBox="0 0 20 20"><g transform="rotate(-30 10 10)"><rect x="3" y="7" width="14" height="6" rx="2" fill="#e8d8b8" stroke="#8a7a5a" stroke-width="1"/></g><path d="M5,2 L10,1 L8,5 L11,5 L6,10 L7,6 L4,6 Z" fill="#f3b21c"/><path d="M10,18 L13.500,9 L17,18 M11.500,15 H15.500" fill="none" stroke="#4b6f96" stroke-width="1.600"/></svg>
<svg class="b" style="left:1061px;top:151px" width="20" height="20" viewBox="0 0 20 20"><path d="M2,6 L7,1.500 H18 V13 L13,18 H2 Z" fill="#fff" stroke="#333" stroke-width="1.100"/><path d="M2,6 H13 V18 H2 Z" fill="#9ed3ef" stroke="#1d5a80" stroke-width="1.200"/><path d="M13,6 L18,1.500" stroke="#333" stroke-width="1.100"/><path d="M15,6 V12 M9,2.500 V5" stroke="#333" stroke-width="0.900"/></svg>
<svg class="b" style="left:1086px;top:159px" width="8" height="5" viewBox="0 0 8 5"><path d="M0.5,0.5 L7.5,0.5 L4,4.5 Z" fill="#8a8a8a"/></svg>
<svg class="b" style="left:1101px;top:151px" width="20" height="20" viewBox="0 0 20 20"><path d="M3,4 L10,2 L17,4 V16 L10,18.500 L3,16 Z" fill="#3d9fd3" stroke="#1d5a80" stroke-width="1.200"/><path d="M10,5 L17,4 V16 L10,18.500 Z" fill="#f1f1f1" stroke="#777"/><path d="M3,4 L10,5 V18.500" fill="none" stroke="#1d5a80"/></svg>
<svg class="b" style="left:1126px;top:159px" width="8" height="5" viewBox="0 0 8 5"><path d="M0.5,0.5 L7.5,0.5 L4,4.5 Z" fill="#8a8a8a"/></svg>
<svg class="b" style="left:1140.5px;top:151px" width="20" height="20" viewBox="0 0 20 20"><path d="M1.500,10 C5,4 15,4 18.500,10 C15,16 5,16 1.500,10 Z" fill="#e9e9e9" stroke="#8d8d8d" stroke-width="1"/><circle cx="10" cy="10" r="3.600" fill="#5b5b5b"/><path d="M10,2 V18" stroke="#444" stroke-width="1"/></svg>
<svg class="b" style="left:1166px;top:159px" width="8" height="5" viewBox="0 0 8 5"><path d="M0.5,0.5 L7.5,0.5 L4,4.5 Z" fill="#8a8a8a"/></svg>
<svg class="b" style="left:1181px;top:151px" width="20" height="20" viewBox="0 0 20 20"><circle cx="9" cy="8" r="6.500" fill="#ececec" stroke="#dadada"/><path d="M11,12 L17,9 L18,13 L12,18 Z" fill="#e6e6e6" stroke="#dadada"/></svg>
<svg class="b" style="left:1206.5px;top:151px" width="20" height="20" viewBox="0 0 20 20"><circle cx="10" cy="7" r="5.500" fill="#ececec" stroke="#dadada"/><path d="M2,12 L10,9 L18,12 V18 H2 Z" fill="#e9e9e9" stroke="#dadada"/></svg>
<svg class="b" style="left:1232.5px;top:159px" width="8" height="5" viewBox="0 0 8 5"><path d="M0.5,0.5 L7.5,0.5 L4,4.5 Z" fill="#b5b5b5"/></svg>
<svg class="b" style="left:1247px;top:151px" width="20" height="20" viewBox="0 0 20 20"><rect x="1.500" y="2.500" width="17" height="11.500" fill="#dfdfdf" stroke="#4a4a4a" stroke-width="1.400"/><path d="M10,14 V17 M6,17.500 H14" stroke="#4a4a4a" stroke-width="1.600"/></svg>
<svg class="b" style="left:1272px;top:159px" width="8" height="5" viewBox="0 0 8 5"><path d="M0.5,0.5 L7.5,0.5 L4,4.5 Z" fill="#8a8a8a"/></svg>
<svg class="b" style="left:1787px;top:151px" width="20" height="20" viewBox="0 0 20 20"><rect x="4.500" y="4.500" width="11" height="11" fill="none" stroke="#9b9b9b"/><path d="M9.500,7.500 V12.500 L6.500,10 Z" fill="#9b9b9b"/></svg>
<svg class="b" style="left:1813px;top:151px" width="20" height="20" viewBox="0 0 20 20"><rect x="4.500" y="4.500" width="11" height="11" fill="none" stroke="#9b9b9b"/><path d="M10.500,7.500 V12.500 L13.500,10 Z" fill="#9b9b9b"/></svg>
<div class="b" style="left:1844px;top:164px;width:10px;height:2.5px;background:#9b9b9b;"></div>
<svg class="b" style="left:1864.5px;top:151px" width="20" height="20" viewBox="0 0 20 20"><path d="M7.500,7 V4.500 H15.500 V11 H13" fill="none" stroke="#9b9b9b" stroke-width="1.200"/><rect x="4.500" y="7.500" width="8" height="6.500" fill="none" stroke="#9b9b9b" stroke-width="1.200"/></svg>
<svg class="b" style="left:1891px;top:151px" width="20" height="20" viewBox="0 0 20 20"><path d="M5,5 L15,15 M15,5 L5,15" stroke="#9b9b9b" stroke-width="1.300"/></svg>
<svg class="b" style="left:1816px;top:181px" width="32" height="26" viewBox="0 0 32 26"><path d="M3,12 L11,20 L28,4" fill="none" stroke="#cfe8c8" stroke-width="5"/></svg>
<svg class="b" style="left:1862px;top:210px" width="26" height="26" viewBox="0 0 26 26"><path d="M4,4 L22,22 M22,4 L4,22" fill="none" stroke="#f4cdc9" stroke-width="5.500"/></svg>
<div class="b" style="left:1894px;top:197px;width:26px;height:168px;background:#d9d9d9;border:1px solid #9b9b9b;box-sizing:border-box;"></div>
<div class="b" style="left:1895px;top:293px;width:25px;height:23.5px;background:#f4f4f4;"></div>
<div class="b" style="left:1894px;top:220.5px;width:26px;height:1px;background:#9b9b9b;"></div>
<div class="b" style="left:1894px;top:244.5px;width:26px;height:1px;background:#9b9b9b;"></div>
<div class="b" style="left:1894px;top:268.5px;width:26px;height:1px;background:#9b9b9b;"></div>
<div class="b" style="left:1894px;top:292.5px;width:26px;height:1px;background:#9b9b9b;"></div>
<div class="b" style="left:1894px;top:316.5px;width:26px;height:1px;background:#9b9b9b;"></div>
<div class="b" style="left:1894px;top:340.5px;width:26px;height:1px;background:#9b9b9b;"></div>
<svg class="b" style="left:1897px;top:198.5px" width="21" height="21" viewBox="0 0 21 21"><path d="M2,10 L10.500,2 L19,10" fill="none" stroke="#1e5f8e" stroke-width="2.400"/><path d="M4.500,10 V19 H16.500 V10 L10.500,4.500 Z" fill="#fff" stroke="#333" stroke-width="1.100"/><rect x="9" y="12" width="4" height="7" fill="#fff" stroke="#333"/></svg>
<svg class="b" style="left:1897px;top:222px" width="21" height="21" viewBox="0 0 21 21"><path d="M4,6 L8,4 V16 L4,18 Z M8,5 L12,3 V15 L8,17 Z M12,4 L16,2.500 V14 L12,16 Z" fill="#f1f1f1" stroke="#333" stroke-width="1.100"/><path d="M4,18 L8,19.500 L17,15 V4" fill="none" stroke="#333" stroke-width="1.100"/></svg>
<svg class="b" style="left:1897px;top:246px" width="21" height="21" viewBox="0 0 21 21"><path d="M2.500,17 V4 H8 L10,6 H17 V8" fill="#e9e9e9" stroke="#333" stroke-width="1.200"/><path d="M2.500,17 L6,8 H19.500 L16,17 Z" fill="#f7f7f7" stroke="#333" stroke-width="1.200"/></svg>
<svg class="b" style="left:1897px;top:270px" width="21" height="21" viewBox="0 0 21 21"><rect x="2.500" y="3.500" width="16" height="14" fill="#fff" stroke="#333" stroke-width="1.200"/><path d="M5,6 H11 V9 H5 Z M13,6 H16 V8 H13 Z M5,13 H8 V11 H11 V13 H13 V16 H5 Z" fill="#f3c81e" stroke="#7a5f00" stroke-width="0.800"/><rect x="14.500" y="11" width="3" height="5.500" fill="#ddd" stroke="#555" stroke-width="0.800"/></svg>
<svg class="b" style="left:1897px;top:294px" width="21" height="21" viewBox="0 0 21 21"><circle cx="10.500" cy="10.500" r="8" fill="#3b7fd9"/><path d="M10.500,10.500 L10.500,2.500 A8,8 0 0 1 18.500,10.500 Z" fill="#e23b2e"/><path d="M10.500,10.500 L18.500,10.500 A8,8 0 0 1 10.500,18.500 Z" fill="#f5c518"/><path d="M10.500,10.500 L10.500,18.500 A8,8 0 0 1 3.500,14.500 Z" fill="#3aa845"/><ellipse cx="8.500" cy="7" rx="4" ry="2.500" fill="#fff" opacity="0.350"/></svg>
<svg class="b" style="left:1897px;top:318px" width="21" height="21" viewBox="0 0 21 21"><rect x="3" y="2.500" width="15" height="16" fill="#fff" stroke="#1e5f8e" stroke-width="1.300"/><rect x="3" y="2.500" width="15" height="3" fill="#1e5f8e"/><path d="M5,9 H8 M5,12.500 H8 M5,16 H8" stroke="#1e5f8e" stroke-width="2"/><path d="M10,9 H16 M10,12.500 H16 M10,16 H16" stroke="#333" stroke-width="1.100"/></svg>
<svg class="b" style="left:1897px;top:342px" width="21" height="21" viewBox="0 0 21 21"><path d="M2,3 H13 V11 H7 L4,14 V11 H2 Z" fill="#3f86bf" stroke="#1d4f78" stroke-width="1"/><path d="M8,8.500 H19 V16 H17 V19 L14,16 H8 Z" fill="#f4f4f4" stroke="#444" stroke-width="1"/></svg>
<svg class="b" style="left:299px;top:178px" width="8" height="11" viewBox="0 0 8 11"><path d="M1.500,1 L6.500,5.500 L1.500,10 Z" fill="#333"/></svg>
<svg class="b" style="left:319.500px;top:175px" width="18" height="18" viewBox="0 0 20 20"><path d="M1.250,6.500 L5.250,6 L5.500,3.500 L7.500,1.250 L13.500,2.500 L13,8.750 L17.250,9.500 L17.500,14 L12,18.500 L1.750,10 Z" fill="#f4cf1c" stroke="#4a3c00" stroke-width="1.300" stroke-linejoin="round"/><path d="M5.500,3.500 L11,5 L13.500,2.500 L7.500,1.250 Z" fill="#ffe96a"/><path d="M1.250,6.500 L5.250,6 L11,9.500 L13,8.750 L17.250,9.500 L12,13.500 Z" fill="#ffe45a"/><path d="M12,13.500 L17.250,9.500 L17.500,14 L12,18.500 Z" fill="#e0b80e"/><path d="M5.500,3.500 L11,5 L13.500,2.500 M11,5 V9.500 M1.250,6.500 L12,13.500 V18.500 M12,13.500 L17.250,9.500" fill="none" stroke="#4a3c00" stroke-width="0.900"/></svg>
<span class="t" style="left:342.5px;top:177px;font-size:12px;line-height:14px;color:#111;letter-spacing:-0.051px;white-space:pre;">Part2  (Default&lt;&lt;Default&gt;...</span>
<svg class="b" style="left:300px;top:908px" width="70" height="66" viewBox="300 908 70 66"><path d="M336.700,947 L322,956.500" stroke="#2424cc" stroke-width="3.800"/><path d="M315,961 L321.500,951.800 L326.500,959.500 Z" fill="#3a3af0"/><path d="M315,961 L324,955.500 L326.500,959.500 Z" fill="#1c1cb0"/><path d="M336.700,947 L351,956.500" stroke="#c4202a" stroke-width="3.800"/><path d="M358.500,961 L347,959.500 L352,951.800 Z" fill="#e8383e"/><path d="M358.500,961 L347,959.500 L349.500,955.700 Z" fill="#b01820"/><path d="M336.700,948 V931" stroke="#1b6b1b" stroke-width="3.800"/><path d="M336.700,922.500 L342.200,932 H331.200 Z" fill="#2f8f2f"/><path d="M336.700,922.500 L342.200,932 H336.700 Z" fill="#1b6b1b"/></svg>
<span class="t" style="left:333px;top:911.5px;font-size:11px;line-height:12px;color:#1b6b1b;">Y</span>
<span class="t" style="left:309.5px;top:955.5px;font-size:11px;line-height:12px;color:#1c1cb0;font-style:italic;">Z</span>
<span class="t" style="left:357.5px;top:955.5px;font-size:11px;line-height:12px;color:#d02030;font-style:italic;">X</span>
<span class="t" style="left:307.5px;top:988px;font-size:13px;line-height:16px;color:#000;font-weight:700;letter-spacing:0.212px;">*Isometric</span>
<div class="b" style="left:1884px;top:832px;width:92px;height:92px;border-radius:50%;background:radial-gradient(circle at 50% 50%,#303338 0%,#26292d 80%,#08090a 88%,#000 100%);box-shadow:0 0 0 1px #13232c;"></div>
<svg class="b" style="left:1900px;top:862px" width="20" height="26" viewBox="0 0 20 26"><path d="M5,21 C7,12 13,7 20,5 V8 C14,10.500 9.500,14 8,21 Z" fill="#8f9297"/></svg>
<div class="b" style="left:0px;top:1006px;width:1920px;height:16px;background:#f4f4f4;"></div>
<div class="b" style="left:295px;top:1006px;width:1625px;height:1px;background:#9f9f9f;"></div>
<div class="b" style="left:366px;top:1006px;width:1554px;height:15px;background:#fafafa;"></div>
<div class="b" style="left:0px;top:1021px;width:1920px;height:1px;background:#a5a5a5;"></div>
<div class="b" style="left:67px;top:1006px;width:66px;height:16px;background:#bdbdbd;border:1px solid #8f8f8f;box-sizing:border-box;"></div>
<svg class="b" style="left:67px;top:1005.5px" width="66" height="17" viewBox="0 0 66 17"><g fill="#a4a4a4" stroke="#999" stroke-width="0.600"><path d="M12,4.500 V12.500 L6,8.500 Z M5,4.500 h1.500 v8 h-1.500z"/><path d="M26,4.500 V12.500 L20,8.500 Z"/><path d="M38,4.500 V12.500 L44,8.500 Z"/><path d="M52,4.500 V12.500 L58,8.500 Z M58.500,4.500 h1.500 v8 h-1.500z"/></g><path d="M16.500,1 V16 M32.500,1 V16 M48.500,1 V16" stroke="#a8a8a8"/></svg>
<div class="b" style="left:133px;top:1006px;width:57px;height:16px;background:#f8f8f8;border-right:1px solid #8f8f8f;box-sizing:border-box;"></div>
<div class="b" style="left:190px;top:1006px;width:176px;height:16px;background:#d2d2d2;border:1px solid #8f8f8f;border-left:none;box-sizing:border-box;"></div>
<div class="b" style="left:257px;top:1007px;width:1px;height:14px;background:#8f8f8f;"></div>
<span class="t" style="left:145.5px;top:1005.75px;font-size:11.5px;line-height:15px;color:#111;font-weight:700;letter-spacing:0.253px;">Model</span>
<span class="t" style="left:200.5px;top:1005.75px;font-size:11.5px;line-height:15px;color:#222;letter-spacing:-0.272px;">3D Views</span>
<span class="t" style="left:267.5px;top:1005.75px;font-size:11.5px;line-height:15px;color:#222;letter-spacing:0.234px;">Motion Study 1</span>
<div class="b" style="left:0px;top:1022px;width:1920px;height:18px;background:#e7e7e7;"></div>
<div class="b" style="left:0px;top:1039px;width:1920px;height:1px;background:#f4f4f4;"></div>
<span class="t" style="left:1px;top:1023.75px;font-size:12px;line-height:15px;color:#111;letter-spacing:-0.039px;">Select a callout to modify parameters</span>
<span class="t" style="left:1509px;top:1023.75px;font-size:12px;line-height:15px;color:#111;letter-spacing:-0.004px;">Total Length: 310mm</span>
<div class="b" style="left:1645px;top:1024px;width:1px;height:14px;background:#d2d2d2;"></div>
<div class="b" style="left:1726px;top:1024px;width:1px;height:14px;background:#d2d2d2;"></div>
<span class="t" style="left:1659px;top:1023.75px;font-size:12px;line-height:15px;color:#111;letter-spacing:-0.087px;">Editing Part</span>
<div class="b" style="left:1741px;top:1024px;width:1px;height:14px;background:#cfcfcf;"></div>
<span class="t" style="left:1774px;top:1023.75px;font-size:12px;line-height:15px;color:#a8a8a8;letter-spacing:-0.336px;">MMGS</span>
<svg class="b" style="left:1827px;top:1029px" width="8" height="5" viewBox="0 0 8 5"><path d="M0.500,4.500 H7.500 L4,0.500 Z" fill="#9a9a9a"/></svg>
<svg class="b" style="left:1899px;top:1023px" width="18" height="16" viewBox="0 0 18 16"><path d="M2,6 L7,2 L16,6 V10 L11,14 L2,10 Z M2,6 L11,10 L16,6 M11,10 V14" fill="#f2f2f2" stroke="#333" stroke-width="1"/><path d="M5,5.500 L9,7.500 M7,4 L11,6" stroke="#555" stroke-width="0.800"/></svg>
<div class="b" style="left:0px;top:1040px;width:1920px;height:40px;background:linear-gradient(90deg,#223a46 0%,#213845 40%,#1f3344 62%,#1c2b47 85%,#1b2847 100%);"></div>
<div class="b" style="left:103px;top:1078px;width:40px;height:2px;background:#7ebde8;"></div>
<div class="b" style="left:201px;top:1078px;width:40px;height:2px;background:#7ebde8;"></div>
<div class="b" style="left:250px;top:1078px;width:40px;height:2px;background:#7ebde8;"></div>
<div class="b" style="left:495px;top:1078px;width:40px;height:2px;background:#7ebde8;"></div>
<div class="b" style="left:643px;top:1078px;width:39px;height:2px;background:#7ebde8;"></div>
<div class="b" style="left:1034px;top:1078px;width:40px;height:2px;background:#7ebde8;"></div>
<div class="b" style="left:1083px;top:1078px;width:39px;height:2px;background:#7ebde8;"></div>
<div class="b" style="left:1132px;top:1078px;width:40px;height:2px;background:#a9d4f0;"></div>
<svg width="0" height="0" style="position:absolute"><defs><linearGradient id="stg" x1="0.2" y1="0" x2="0.8" y2="1"><stop offset="0" stop-color="#12123c"/><stop offset="0.5" stop-color="#12306a"/><stop offset="1" stop-color="#1a86c2"/></linearGradient></defs></svg>
<svg class="b" style="left:8px;top:1044px" width="32" height="32" viewBox="0 0 32 32"><path d="M8,9.500 L15,8.500 V15.500 H8 Z M16,8.300 L24,7 V15.500 H16 Z M8,16.500 H15 V23.500 L8,22.500 Z M16,16.500 H24 V25 L16,23.700 Z" fill="#fff"/></svg>
<svg class="b" style="left:56px;top:1044px" width="32" height="32" viewBox="0 0 32 32"><g fill="none" stroke="#fff" stroke-width="1.500"><rect x="9" y="11.500" width="10" height="9"/><path d="M8,8 V9.500 M8,8 H20 M20,8 V9.500 M8,24 V22.500 M8,24 H20 M20,24 V22.500"/><path d="M23,8 V10.500 M23,12.500 V19.500 M23,21.500 V24" stroke-width="2"/></g></svg>
<div class="b" style="left:111px;top:1048px;width:24px;height:24px;background:#fdfdff;"></div>
<svg class="b" style="left:111px;top:1048px" width="24" height="24" viewBox="0 0 24 24"><g fill="none" stroke="#3b49df" stroke-width="2.300" stroke-linecap="round"><circle cx="12" cy="9.500" r="2.200"/><path d="M11,3.800 C16,3 19.500,7 18,11 C16.800,14.200 12.500,15.500 9.500,13.500"/><path d="M13,15.600 C8,16.200 4.500,12.500 6,8.300 C6.800,6 9,4.800 11,5"/></g></svg>
<span class="t" style="left:112px;top:1062.5px;font-size:8px;line-height:9px;color:#3b49df;font-weight:700;letter-spacing:-0.409px;">trocen</span>
<svg class="b" style="left:155px;top:1044px" width="32" height="32" viewBox="0 0 32 32"><path d="M16,4.500 C23.500,4.500 27.500,8 27.500,14.500 C27.500,21 23.500,24.500 17,24.500 L13,28.500 V24.200 C7.500,23.500 4.500,20 4.500,14.500 C4.500,8 8.500,4.500 16,4.500 Z" fill="#7b4fe0" stroke="#f0eaff" stroke-width="1.800"/><path d="M11,10 C11,16 15,20 21,20 L22,17.500 L19,16 L17.500,17 C15.500,16 14,14.500 13.500,13 L14.500,11.500 L13,9 Z" fill="#fff"/><path d="M17,8.500 C20.500,8.500 22.500,10.500 22.500,14 M17,11 C19,11 20,12 20,14" fill="none" stroke="#fff" stroke-width="1"/></svg>
<svg class="b" style="left:204px;top:1044px" width="32" height="32" viewBox="0 0 32 32"><path d="M8,6 H24 C25.500,6 26.500,7 26.500,8.500 V27 L22,23.500 H8 C6.500,23.500 5.500,22.500 5.500,21 V8.500 C5.500,7 6.500,6 8,6 Z" fill="#7486c9"/><path d="M10,19 C9,15 10,12 11.500,10.500 C13,10 14,10 14.500,10.500 H17.500 C18,10 19,10 20.500,10.500 C22,12 23,15 22,19 C20,20.500 18.500,20 18,19 H14 C13.500,20 12,20.500 10,19 Z" fill="#fff"/><ellipse cx="13.500" cy="15.500" rx="1.500" ry="1.800" fill="#7486c9"/><ellipse cx="18.500" cy="15.500" rx="1.500" ry="1.800" fill="#7486c9"/></svg>
<div class="b" style="left:258px;top:1048px;width:24px;height:24px;background:linear-gradient(100deg,#c81008,#e00000 50%,#a80000);"></div>
<svg class="b" style="left:258px;top:1048px" width="24" height="24" viewBox="0 0 24 24"><path d="M14,3 L7,13 H11.500 L9.500,21 L17,10.500 H12.500 Z" fill="#fff"/></svg>
<svg class="b" style="left:302px;top:1044px" width="32" height="32" viewBox="0 0 32 32"><circle cx="16" cy="16" r="12" fill="url(#stg)"/><circle cx="20.500" cy="12.500" r="4" fill="none" stroke="#fff" stroke-width="1.800"/><circle cx="20.500" cy="12.500" r="1.800" fill="#dfe8f2"/><path d="M4.200,15.500 L12,19 L17,14.500 L20,17 L13.500,22.500 L5,19.500 Z" fill="#fff"/><circle cx="12" cy="20.500" r="2.600" fill="#fff"/></svg>
<div class="b" style="left:356px;top:1049px;width:22px;height:22px;background:#2a3a44;"></div>
<svg class="b" style="left:356px;top:1049px" width="22" height="22" viewBox="0 0 22 22"><path d="M9,3 L12,6 L9,9 L6,6 Z" fill="#fff"/><path d="M13,7 L17,11 L9,19 H5 V15 Z" fill="#3fd6b8"/></svg>
<svg class="b" style="left:400px;top:1044px" width="32" height="32" viewBox="0 0 32 32"><path d="M16,4 L19,4 L24,22 H8 L13,4 Z" fill="#f48b0d"/><path d="M12,9.500 H20 L21,13.500 H11 Z M10,17.500 H22 L22.800,20.500 H9.200 Z" fill="#f2f2f2"/><path d="M6,22 H26 L27.500,27 H4.500 Z" fill="#f07a00"/></svg>
<svg class="b" style="left:449px;top:1044px" width="32" height="32" viewBox="0 0 32 32"><circle cx="16" cy="16" r="12" fill="#5cb531"/><path d="M10,5.500 A12,12 0 0 1 27,11 L16,27.800 A12,12 0 0 1 10,5.500Z" fill="#7ccc3a" opacity="0.600"/><path d="M7,9 L20,24 L21.500,27 L18,26 L5.500,12 Z" fill="#fff"/><path d="M10,7 L22,19" stroke="#fff" stroke-width="1.500"/></svg>
<svg class="b" style="left:498px;top:1044px" width="32" height="32" viewBox="0 0 32 32"><circle cx="16" cy="16" r="11" fill="#63a83c" stroke="#63a83c" stroke-width="3" stroke-dasharray="3 2.200"/><path d="M16,16 L5,20 A11.500,11.500 0 0 1 22,6 Z" fill="#b98a4e"/><path d="M6,14 A11,11 0 0 1 20,5.500" stroke="#b98a4e" stroke-width="3.500" stroke-dasharray="3 2.200" fill="none"/></svg>
<span class="t" style="left:507.5px;top:1050px;font-size:8px;line-height:9px;color:#fff;font-weight:700;">19</span>
<span class="t" style="left:515.5px;top:1059.5px;font-size:9px;line-height:10px;color:#fff;font-weight:700;">17</span>
<svg class="b" style="left:547px;top:1044px" width="32" height="32" viewBox="0 0 32 32"><circle cx="16" cy="16" r="10.500" fill="#0a0a0a" stroke="#fff" stroke-width="2"/><circle cx="16" cy="16" r="6" fill="#e8201c"/></svg>
<div class="b" style="left:601px;top:1048px;width:24px;height:24px;background:#fff;"></div>
<svg class="b" style="left:601px;top:1048px" width="24" height="24" viewBox="0 0 24 24"><rect x="5" y="8.500" width="14" height="7" rx="3.500" fill="none" stroke="#1c1c1c" stroke-width="2.600"/></svg>
<svg class="b" style="left:645px;top:1044px" width="32" height="32" viewBox="0 0 32 32"><circle cx="16" cy="17" r="11" fill="#ff7b1a"/><path d="M16,6 C20,2 22,6 21,8 C26,10 28,16 26,21 C24,26 19,28.500 14,27.500 C20,26 23,21 21,15 Z" fill="#ffc52b"/><path d="M6,12 C4,18 6,25 13,27.500 C8,23 8,16 11,12 Z" fill="#f0364a"/><circle cx="16.500" cy="16.500" r="5.500" fill="#7a3bd6"/><path d="M12,12 C14,11 17,11.500 18,13.500 C15.500,13 14,14.500 14.500,17 C12.500,16 11.500,14 12,12Z" fill="#ff9a2e"/></svg>
<svg class="b" style="left:694px;top:1044px" width="32" height="32" viewBox="0 0 32 32"><path d="M4,7 H12 L14,9.500 H28 V25 H4 Z" fill="#f2b72e"/><path d="M4,11.500 H28 V25 H4 Z" fill="#ffd45a"/><path d="M11,18 H21 V25 H11 Z" fill="#3a8fe0"/><path d="M13.500,21 H18.500 V25 H13.500 Z" fill="#ffd45a"/></svg>
<svg class="b" style="left:743px;top:1044px" width="32" height="32" viewBox="0 0 32 32"><rect x="5" y="8" width="22" height="16" fill="#e9f1fb" stroke="#c7d6ea" stroke-width="1"/><rect x="11" y="10" width="9" height="12" fill="#1b76de"/><path d="M6.500,11 H9.500 M6.500,14 H9.500 M6.500,17 H9.500 M6.500,20 H9.500 M22,11 H25.500 M22,14 H25.500 M22,17 H25.500 M22,20 H25.500" stroke="#5b7fae" stroke-width="1.300"/></svg>
<svg class="b" style="left:792px;top:1044px" width="32" height="32" viewBox="0 0 32 32"><circle cx="16" cy="16" r="11.500" fill="#d9deec"/><circle cx="17" cy="17" r="9" fill="#121a52"/><path d="M9,13 A9,9 0 0 1 24,10 C20,9 13,10 9,13 Z" fill="#5a6bd0"/><circle cx="20.500" cy="20" r="3" fill="#3a4aa8"/></svg>
<svg class="b" style="left:841px;top:1044px" width="32" height="32" viewBox="0 0 32 32"><path d="M5.200,8 L15,4 L28,7 V18.500 L17,23 L5.200,19 Z" fill="#b0181c"/><path d="M5.200,8 L15,4 L28,7 L17,11.500 Z" fill="#ea2c20"/><path d="M17,11.500 V23 L28,18.500 V7 Z" fill="#8c1014"/></svg><span class="t" style="left:847.5px;top:1051.25px;font-size:12.5px;line-height:16px;color:#fff;font-weight:700;">S</span><span class="t" style="left:858.2px;top:1051.25px;font-size:12.5px;line-height:16px;color:#fff;font-weight:700;transform:scaleX(0.8042);transform-origin:0 50%;">W</span><span class="t" style="left:851.7px;top:1063.25px;font-size:7.5px;line-height:10px;color:#fff;font-weight:700;letter-spacing:0.178px;text-shadow:0 0 1px #000,0 0 1.500px #000,0 0 2px #000;">2019</span>
<svg class="b" style="left:890px;top:1044px" width="32" height="32" viewBox="0 0 32 32"><path d="M6.700,3.800 L27.800,5.300 V26.700 L6.700,28.300 Z" fill="#f8b80c"/><path d="M6.700,3.800 L27.800,5.300 V7 L6.700,5.600 Z" fill="#ffe020"/><path d="M10.500,8 H24 V10.500 H10.500 Z M16,16 H24.500 V18.500 H16 Z M10.500,21 H24.500 V23.500 H10.500 Z M22,16 H24.500 V23.500 H22 Z" fill="#fffbe8"/></svg>
<svg class="b" style="left:939px;top:1044px" width="32" height="32" viewBox="0 0 32 32"><rect x="6" y="6.500" width="20" height="19" fill="#4f97cf"/><rect x="7.500" y="8" width="14" height="16" fill="#9cc7ea"/><circle cx="15" cy="16" r="6.500" fill="#f38a1a"/><path d="M13,12.500 L19,16 L13,19.500 Z" fill="#fff"/></svg>
<div class="b" style="left:993px;top:1048px;width:24px;height:24px;background:#ef443b;"></div>
<svg class="b" style="left:993px;top:1048px" width="24" height="24" viewBox="0 0 24 24"><path d="M9.500,7.500 L14,12 L9.500,16.500 L5,12 Z" fill="#fff"/><path d="M14,7.500 L18.500,12 L14,16.500 M12.500,9 L15.500,12 L12.500,15" fill="none" stroke="#fff" stroke-width="2"/></svg>
<svg class="b" style="left:1037px;top:1044px" width="32" height="32" viewBox="0 0 32 32"><circle cx="16" cy="16" r="11" fill="#131a14" stroke="#69b92e" stroke-width="2.400"/><path d="M9.500,9 L13,6.500 L23,19 L24.500,24 L19.500,22 Z" fill="#fff"/><path d="M10.500,11.500 L14.500,8.500" stroke="#131a14" stroke-width="1.200"/><path d="M21.500,21 L24.500,24 L23,19.500Z" fill="#131a14"/></svg>
<svg class="b" style="left:1086px;top:1044px" width="32" height="32" viewBox="0 0 32 32"><circle cx="16" cy="16" r="12" fill="url(#stg)"/><circle cx="20.500" cy="12.500" r="4" fill="none" stroke="#fff" stroke-width="1.800"/><circle cx="20.500" cy="12.500" r="1.800" fill="#dfe8f2"/><path d="M4.200,15.500 L12,19 L17,14.500 L20,17 L13.500,22.500 L5,19.500 Z" fill="#fff"/><circle cx="12" cy="20.500" r="2.600" fill="#fff"/></svg>
<svg class="b" style="left:1135px;top:1044px" width="32" height="32" viewBox="0 0 32 32"><path d="M5.200,8 L15,4 L28,7 V18.500 L17,23 L5.200,19 Z" fill="#b0181c"/><path d="M5.200,8 L15,4 L28,7 L17,11.500 Z" fill="#ea2c20"/><path d="M17,11.500 V23 L28,18.500 V7 Z" fill="#8c1014"/></svg><span class="t" style="left:1141.5px;top:1051.25px;font-size:12.5px;line-height:16px;color:#fff;font-weight:700;">S</span><span class="t" style="left:1152.2px;top:1051.25px;font-size:12.5px;line-height:16px;color:#fff;font-weight:700;transform:scaleX(0.8042);transform-origin:0 50%;">W</span><span class="t" style="left:1145.7px;top:1063.25px;font-size:7.5px;line-height:10px;color:#fff;font-weight:700;letter-spacing:0.178px;text-shadow:0 0 1px #000,0 0 1.500px #000,0 0 2px #000;">2019</span>
<svg class="b" style="left:1668px;top:1054px" width="14" height="10" viewBox="0 0 14 10"><path d="M1.500,8 L7,2.500 L12.500,8" fill="none" stroke="#fff" stroke-width="1.400"/></svg>
<svg class="b" style="left:1690px;top:1051px" width="18" height="18" viewBox="0 0 18 18"><g fill="none" stroke="#fff" stroke-width="1.200"><rect x="5.500" y="3.500" width="11" height="8"/><path d="M8,14.500 H14 M11,11.500 V14.500"/><rect x="1.500" y="6.500" width="4" height="9" fill="#1c2b47"/><path d="M2.500,13.500 H4.500"/></g></svg>
<svg class="b" style="left:1713px;top:1051px" width="20" height="18" viewBox="0 0 20 18"><g fill="none" stroke="#fff" stroke-width="1.200"><path d="M1.500,6.500 H4.500 L8.500,3 V15 L4.500,11.500 H1.500 Z"/><path d="M11,6.500 C12.200,8 12.200,10 11,11.500 M13.500,4.500 C15.500,7 15.500,11 13.500,13.500 M16,2.500 C19,6 19,12 16,15.500"/></g></svg>
<svg class="b" style="left:1738px;top:1053px" width="25" height="14" viewBox="0 0 25 14"><rect x="1" y="1" width="23" height="12" fill="none" stroke="#fff" stroke-width="1.200"/><path d="M3.500,4.500 H21.500 M3.500,7 H21.500" stroke="#fff" stroke-width="1.200" stroke-dasharray="1.500 1.500"/><path d="M6.500,10 H18.500" stroke="#fff" stroke-width="1.200"/></svg>
<span class="t" style="left:1773.4px;top:1053px;font-size:12px;line-height:15px;color:#fff;letter-spacing:-1.139px;">ENG</span>
<div class="b" style="left:1915px;top:1040px;width:1px;height:40px;background:#46546e;"></div>
<span class="t" style="left:1810px;top:1043.5px;font-size:12px;line-height:15px;color:#fff;letter-spacing:-0.102px;">11:17 AM</span>
<span class="t" style="left:1808px;top:1061.5px;font-size:12px;line-height:15px;color:#fff;letter-spacing:-0.043px;">4/10/2020</span>
<svg class="b" style="left:1877px;top:1049px" width="26" height="26" viewBox="0 0 26 26"><path d="M3,3.500 H19 V15.500 H9 L5.500,19 V15.500 H3 Z" fill="#fff"/><path d="M6,7 H16 M6,10 H16 M6,13 H12" stroke="#1b2847" stroke-width="1.200"/><circle cx="17" cy="17" r="6.300" fill="#1b2847" stroke="#e9e9e9" stroke-width="1.100"/></svg>
<span class="t" style="left:1891px;top:1059.5px;font-size:10.5px;line-height:13px;color:#fff;font-weight:700;">2</span>
</body></html>
